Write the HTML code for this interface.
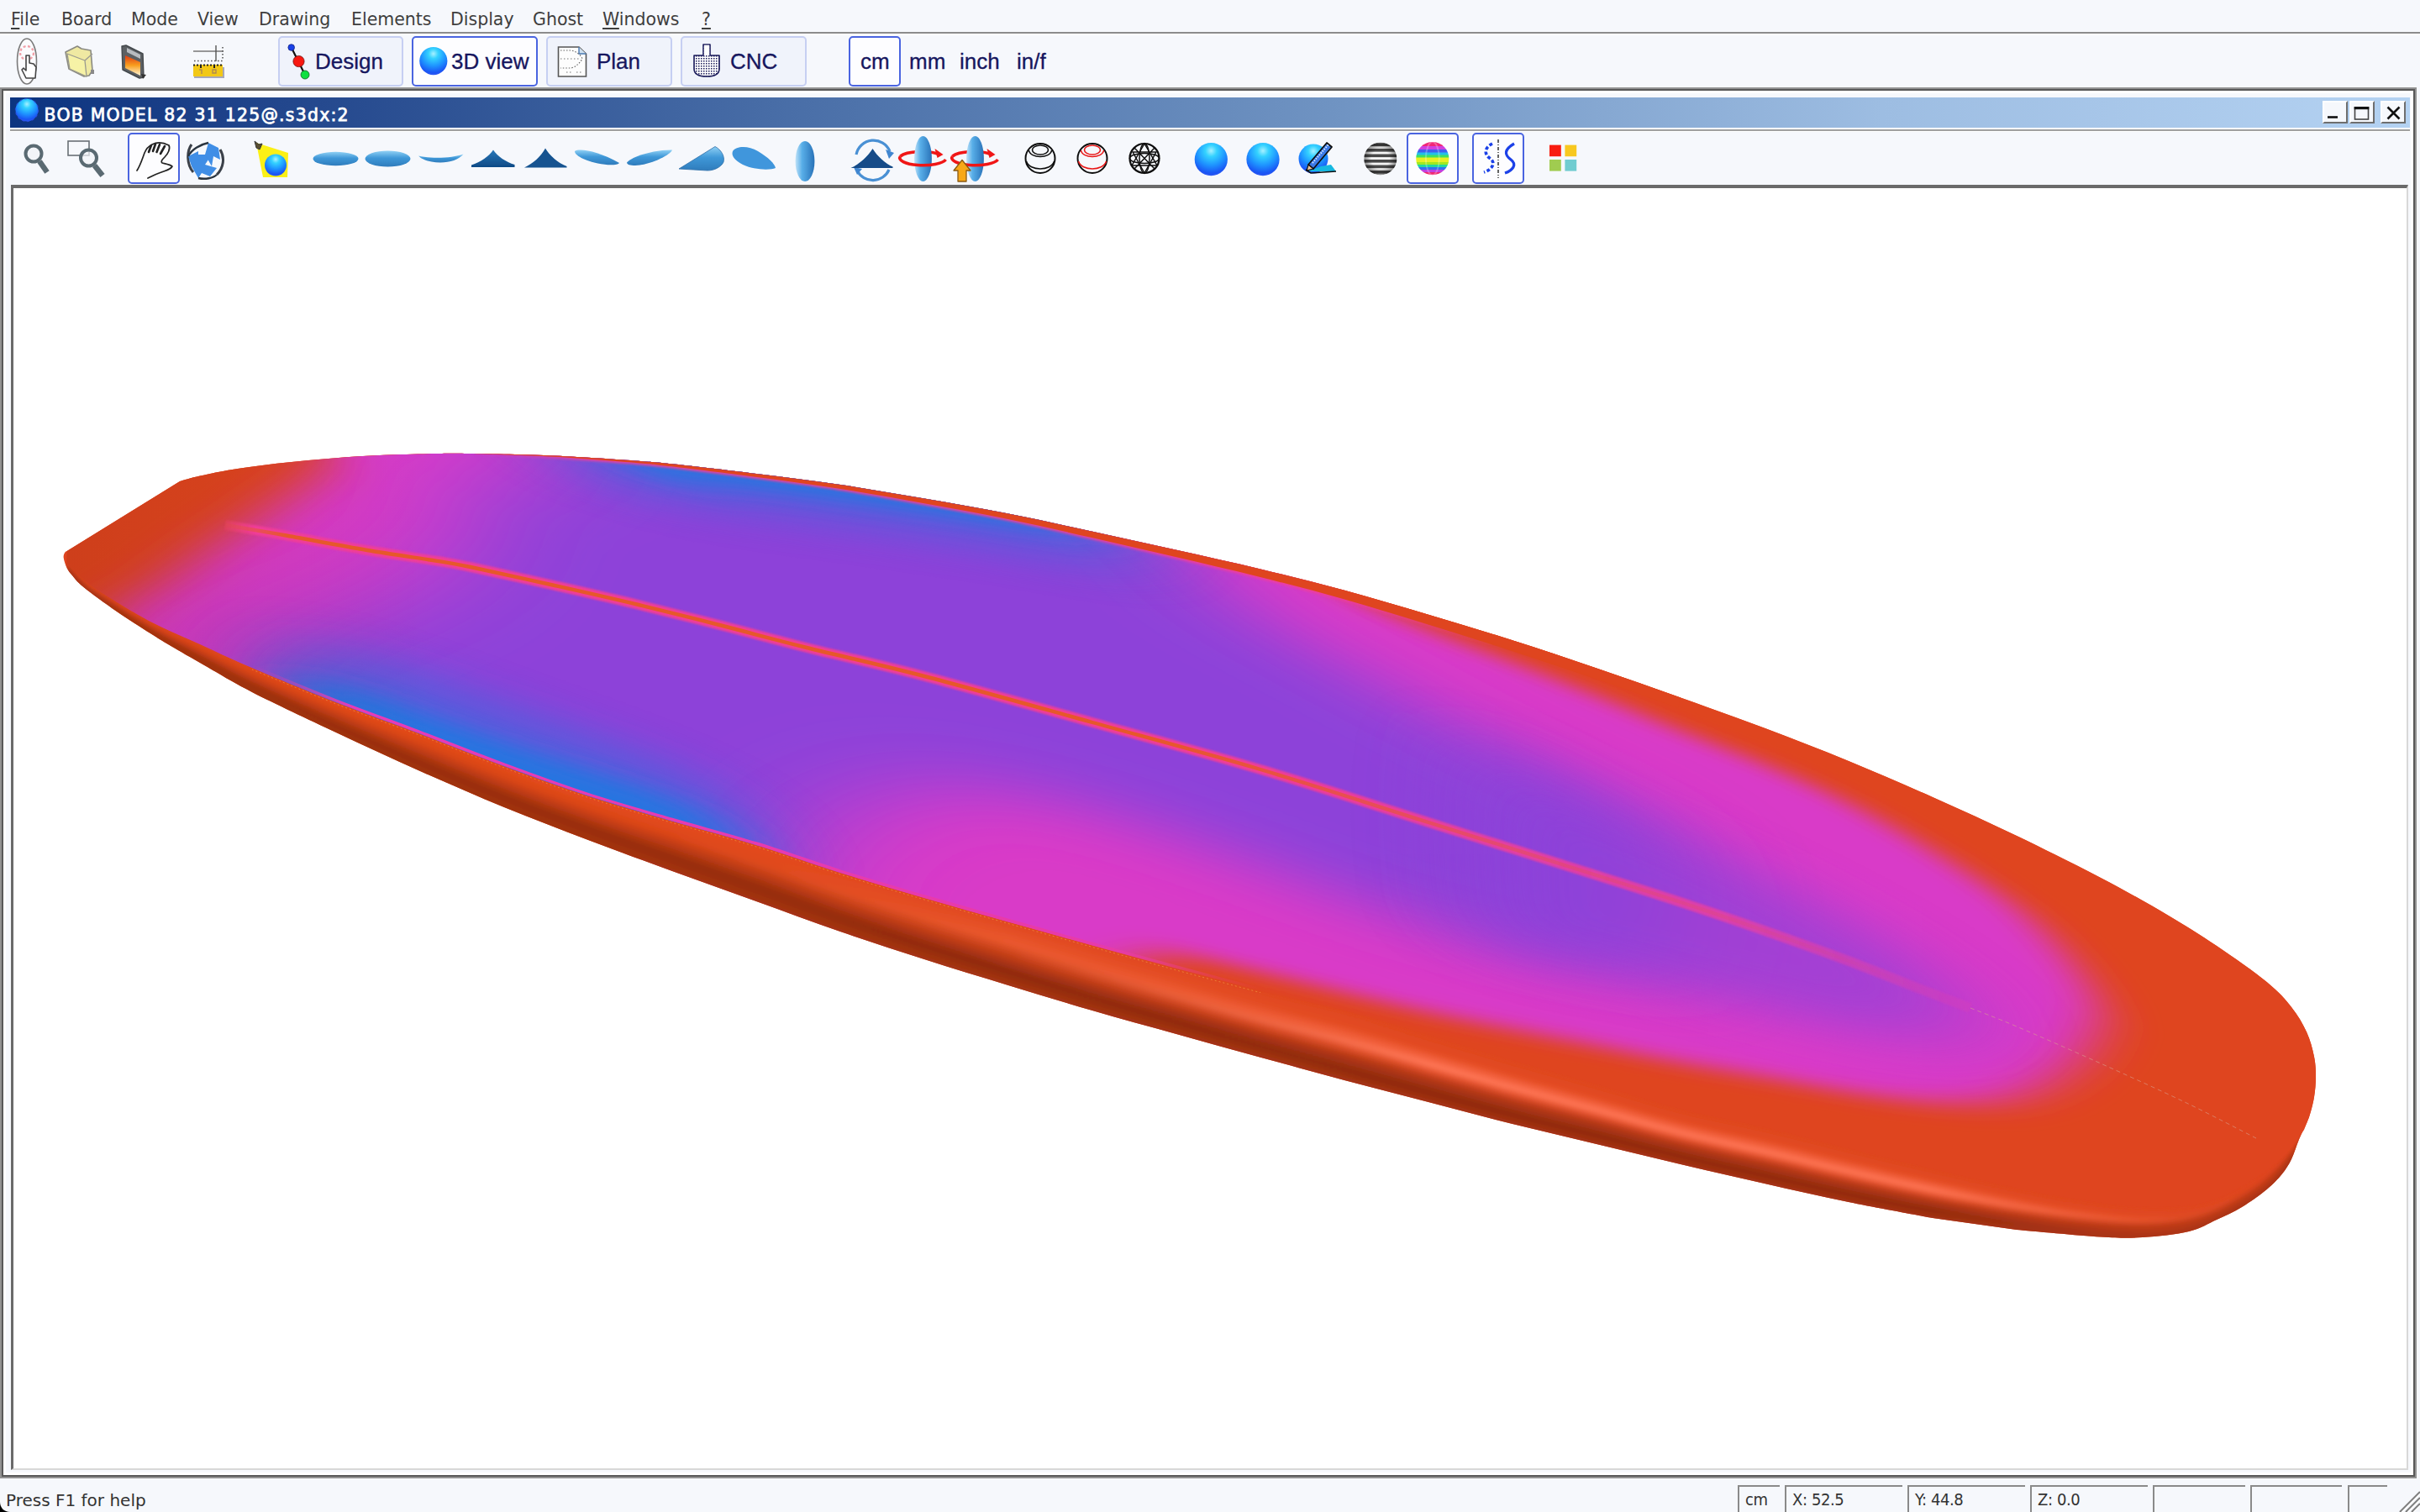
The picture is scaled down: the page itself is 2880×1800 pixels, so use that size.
<!DOCTYPE html>
<html><head><meta charset="utf-8"><title>BOB MODEL 82 31 125@.s3dx:2</title>
<style>
html,body{margin:0;padding:0;}
body{width:2880px;height:1800px;overflow:hidden;background:#f6f8fc;position:relative;font-family:"DejaVu Sans","Liberation Sans",sans-serif;color:#222;}
.abs{position:absolute;}
.menu{position:absolute;top:1.7px;left:0;height:38px;width:2880px;font-size:20.5px;line-height:42px;color:#3e3e3e;}
.menu span{position:absolute;top:0;white-space:nowrap;}
.menu u{text-decoration:underline;text-underline-offset:3px;text-decoration-thickness:2px;}
.hl{position:absolute;left:0;width:2880px;}
.tbtn{position:absolute;top:43px;height:60px;border:2px solid #c6cff2;border-radius:5px;background:#f0f3fb;box-sizing:border-box;font-family:"Liberation Sans",sans-serif;font-size:26px;color:#16165e;}
.tbtn.sel{border-color:#4a64e0;background:#fdfdff;}
.tbtn span{position:absolute;top:13px;white-space:nowrap;-webkit-text-stroke:0.3px #16165e;}
.unit{position:absolute;top:58px;font-family:"Liberation Sans",sans-serif;font-size:26px;color:#16165e;white-space:nowrap;-webkit-text-stroke:0.3px #16165e;}
.selbox{position:absolute;border:2px solid #4a64e0;border-radius:5px;background:#fdfdff;box-sizing:border-box;}
.title{position:absolute;left:12px;top:116px;width:2856px;height:36px;background:linear-gradient(90deg,#0c3480 0%,#1c4088 8%,#4a6fa8 33%,#6f93c2 55%,#9dbde2 78%,#b4d2f2 100%);}
.title span{position:absolute;left:40.5px;top:5.6px;font-size:20.4px;font-weight:normal;-webkit-text-stroke:0.75px #fff;color:#fff;letter-spacing:1.26px;white-space:nowrap;line-height:30px;}
.wbtn{position:absolute;top:120px;width:30px;height:27px;background:#f6f8fc;border-top:2px solid #fff;border-left:2px solid #fff;border-right:2px solid #6e6e6e;border-bottom:2px solid #6e6e6e;box-sizing:border-box;}
.status{position:absolute;font-size:20px;color:#333;white-space:nowrap;}
.sbox{position:absolute;top:1768px;height:40px;border-top:2px solid #8a8a8a;border-left:2px solid #8a8a8a;box-sizing:border-box;font-family:"DejaVu Sans Condensed","DejaVu Sans",sans-serif;font-size:20px;color:#333;line-height:30.5px;padding-left:7px;white-space:nowrap;letter-spacing:-0.4px;}
</style></head><body>
<div class="menu"><span style="left:13px"><u>F</u>ile</span><span style="left:73px">Board</span><span style="left:156px">Mode</span><span style="left:235px">View</span><span style="left:308px">Drawing</span><span style="left:418px">Elements</span><span style="left:536px">Display</span><span style="left:634px">Ghost</span><span style="left:717px"><u>W</u>indows</span><span style="left:835px"><u>?</u></span></div>
<div class="hl" style="top:38px;height:2px;background:#8c8c8c"></div>
<div class="hl" style="top:40px;height:2px;background:#ffffff"></div>
<div class="tbtn" style="left:331px;width:149px"><span style="left:42px">Design</span></div>
<div class="tbtn sel" style="left:490px;width:150px"><span style="left:45px">3D view</span></div>
<div class="tbtn" style="left:650px;width:150px"><span style="left:58px">Plan</span></div>
<div class="tbtn" style="left:810px;width:150px"><span style="left:57px">CNC</span></div>
<div class="selbox" style="left:1010px;top:43px;width:62px;height:60px"></div>
<div class="unit" style="left:1024px">cm</div>
<div class="unit" style="left:1082px">mm</div>
<div class="unit" style="left:1142px">inch</div>
<div class="unit" style="left:1210px">in/f</div>
<div class="abs" style="left:0;top:104px;width:2876px;height:1656px;box-sizing:border-box;border:2px solid #929292;"></div>
<div class="abs" style="left:2px;top:106px;width:2872px;height:1652px;box-sizing:border-box;border:2px solid #585858;"></div>
<div class="abs" style="left:4px;top:108px;width:2868px;height:1648px;box-sizing:border-box;border:3px solid #fff;"></div>
<div class="title"><span>BOB MODEL 82 31 125@.s3dx:2</span></div>
<div class="hl" style="left:12px;width:2856px;top:154px;height:2px;background:#a0a0a0"></div>
<div class="hl" style="left:12px;width:2856px;top:156px;height:1px;background:#fff"></div>
<div class="wbtn" style="left:2764px"></div>
<div class="wbtn" style="left:2795.5px"></div>
<div class="wbtn" style="left:2832.5px"></div>
<div class="selbox" style="left:152px;top:158px;width:62px;height:61px"></div>
<div class="selbox" style="left:1674px;top:158px;width:62px;height:61px"></div>
<div class="selbox" style="left:1752px;top:158px;width:62px;height:61px"></div>
<div class="abs" style="left:13px;top:220px;width:2853px;height:1530px;box-sizing:border-box;background:#fff;border-top:4px solid #6a6a6a;border-left:3px solid #6a6a6a;border-right:2px solid #d8d8d8;border-bottom:2px solid #d8d8d8;"></div>
<div class="status" style="left:7px;top:1771px;line-height:30px">Press F1 for help</div>
<div class="sbox" style="left:2068px;width:50px">cm</div>
<div class="sbox" style="left:2124px;width:140px">X: 52.5</div>
<div class="sbox" style="left:2270px;width:140px">Y: 44.8</div>
<div class="sbox" style="left:2416px;width:140px">Z: 0.0</div>
<div class="sbox" style="left:2562px;width:110px"></div>
<div class="sbox" style="left:2678px;width:109px"></div>
<div class="sbox" style="left:2794px;width:47px"></div>
<svg width="2880" height="1800" viewBox="0 0 2880 1800" style="position:absolute;left:0;top:0">
<defs>
<clipPath id="cs"><path d="M214.0 573.0 C218.0 571.9 227.3 569.0 238.0 566.6 C248.7 564.2 261.5 561.3 278.0 558.7 C294.5 556.1 317.2 553.2 337.0 551.0 C356.8 548.8 377.0 546.9 397.0 545.4 C417.0 543.9 436.5 542.7 457.0 541.8 C477.5 540.9 502.8 540.3 520.0 540.0 C537.2 539.7 536.7 539.6 560.0 540.0 C583.3 540.4 626.7 541.0 660.0 542.5 C693.3 544.0 736.7 547.1 760.0 548.8 C783.3 550.4 776.7 549.8 800.0 552.3 C823.3 554.8 866.7 559.9 900.0 564.0 C933.3 568.1 966.7 572.1 1000.0 577.0 C1033.3 581.9 1066.7 587.8 1100.0 593.5 C1133.3 599.2 1166.7 605.0 1200.0 611.5 C1233.3 618.0 1266.7 625.6 1300.0 632.8 C1333.3 640.0 1366.7 647.3 1400.0 654.8 C1433.3 662.2 1466.7 669.5 1500.0 677.5 C1533.3 685.5 1566.7 693.8 1600.0 702.8 C1633.3 711.8 1666.7 721.9 1700.0 731.8 C1733.3 741.7 1766.7 751.6 1800.0 762.2 C1833.3 772.8 1866.7 784.1 1900.0 795.5 C1933.3 806.9 1966.7 818.6 2000.0 830.5 C2033.3 842.4 2066.7 854.2 2100.0 866.8 C2133.3 879.4 2166.7 892.3 2200.0 906.0 C2233.3 919.7 2266.7 934.2 2300.0 949.0 C2333.3 963.8 2366.7 979.0 2400.0 995.0 C2433.3 1011.0 2470.2 1029.4 2500.0 1045.0 C2529.8 1060.6 2555.6 1075.2 2578.6 1088.7 C2601.6 1102.2 2618.2 1112.6 2638.0 1126.0 C2657.8 1139.4 2682.8 1156.8 2697.6 1169.0 C2712.4 1181.2 2719.1 1189.1 2727.0 1199.0 C2734.9 1208.9 2740.5 1218.8 2745.0 1228.6 C2749.5 1238.4 2752.2 1249.1 2754.0 1258.0 C2755.8 1266.9 2756.0 1274.0 2756.0 1282.0 C2756.0 1290.0 2755.3 1298.0 2754.0 1306.0 C2752.7 1314.0 2751.0 1321.6 2748.0 1330.0 C2745.0 1338.4 2739.5 1348.2 2736.0 1356.5 C2732.5 1364.8 2730.4 1373.1 2727.0 1380.0 C2723.6 1386.9 2720.4 1392.0 2715.5 1398.0 C2710.6 1404.0 2705.5 1409.5 2697.6 1416.0 C2689.7 1422.5 2677.9 1431.0 2668.0 1437.0 C2658.1 1443.0 2648.5 1447.2 2638.0 1452.0 C2627.5 1456.8 2619.7 1462.5 2605.0 1466.0 C2590.3 1469.5 2567.5 1471.9 2550.0 1473.0 C2532.5 1474.1 2525.0 1474.0 2500.0 1472.5 C2475.0 1471.0 2416.7 1465.4 2400.0 1464.0 L2300.0 1450.0 C2283.3 1446.8 2233.3 1437.8 2200.0 1431.0 C2166.7 1424.2 2133.3 1416.5 2100.0 1409.0 C2066.7 1401.5 2033.3 1393.8 2000.0 1386.0 C1966.7 1378.2 1933.3 1370.0 1900.0 1362.0 C1866.7 1354.0 1833.3 1346.3 1800.0 1338.0 C1766.7 1329.7 1733.3 1320.7 1700.0 1312.0 C1666.7 1303.3 1633.3 1294.9 1600.0 1286.0 C1566.7 1277.1 1533.3 1267.9 1500.0 1258.7 C1466.7 1249.5 1433.3 1240.3 1400.0 1231.0 C1366.7 1221.7 1333.3 1212.7 1300.0 1203.0 C1266.7 1193.3 1233.3 1183.2 1200.0 1173.0 C1166.7 1162.8 1133.3 1152.7 1100.0 1142.0 C1066.7 1131.3 1033.3 1120.5 1000.0 1109.0 C966.7 1097.5 933.3 1085.0 900.0 1073.0 C866.7 1061.0 833.3 1049.2 800.0 1037.0 C766.7 1024.8 733.3 1012.7 700.0 1000.0 C666.7 987.3 633.3 974.7 600.0 961.0 C566.7 947.3 533.3 932.8 500.0 918.0 C466.7 903.2 433.3 887.7 400.0 872.0 C366.7 856.3 327.0 837.8 300.0 824.0 C273.0 810.2 254.7 798.5 238.0 789.0 C221.3 779.5 209.8 772.8 200.0 767.0 C190.2 761.2 189.2 760.5 179.0 754.0 C168.8 747.5 152.2 737.2 139.0 728.0 C125.8 718.8 108.3 706.2 99.5 699.0 C90.7 691.8 89.3 688.8 86.0 685.0 C82.7 681.2 81.2 679.5 79.5 676.0 C77.8 672.5 76.1 667.0 75.7 664.0 C75.3 661.0 76.3 659.3 77.0 658.0 C77.7 656.7 79.2 656.3 79.7 656.0 Z"/></clipPath>
<clipPath id="cd"><path d="M214.0 573.0 C218.0 571.9 227.3 569.0 238.0 566.6 C248.7 564.2 261.5 561.3 278.0 558.7 C294.5 556.1 317.2 553.2 337.0 551.0 C356.8 548.8 377.0 546.9 397.0 545.4 C417.0 543.9 436.5 542.7 457.0 541.8 C477.5 540.9 502.8 540.3 520.0 540.0 C537.2 539.7 536.7 539.6 560.0 540.0 C583.3 540.4 626.7 541.0 660.0 542.5 C693.3 544.0 736.7 547.1 760.0 548.8 C783.3 550.4 776.7 549.8 800.0 552.3 C823.3 554.8 866.7 559.9 900.0 564.0 C933.3 568.1 966.7 572.1 1000.0 577.0 C1033.3 581.9 1066.7 587.8 1100.0 593.5 C1133.3 599.2 1166.7 605.0 1200.0 611.5 C1233.3 618.0 1266.7 625.6 1300.0 632.8 C1333.3 640.0 1366.7 647.3 1400.0 654.8 C1433.3 662.2 1466.7 669.5 1500.0 677.5 C1533.3 685.5 1566.7 693.8 1600.0 702.8 C1633.3 711.8 1666.7 721.9 1700.0 731.8 C1733.3 741.7 1766.7 751.6 1800.0 762.2 C1833.3 772.8 1866.7 784.1 1900.0 795.5 C1933.3 806.9 1966.7 818.6 2000.0 830.5 C2033.3 842.4 2066.7 854.2 2100.0 866.8 C2133.3 879.4 2166.7 892.3 2200.0 906.0 C2233.3 919.7 2266.7 934.2 2300.0 949.0 C2333.3 963.8 2366.7 979.0 2400.0 995.0 C2433.3 1011.0 2470.2 1029.4 2500.0 1045.0 C2529.8 1060.6 2555.6 1075.2 2578.6 1088.7 C2601.6 1102.2 2618.2 1112.6 2638.0 1126.0 C2657.8 1139.4 2682.8 1156.8 2697.6 1169.0 C2712.4 1181.2 2719.1 1189.1 2727.0 1199.0 C2734.9 1208.9 2740.5 1218.8 2745.0 1228.6 C2749.5 1238.4 2752.2 1249.1 2754.0 1258.0 C2755.8 1266.9 2756.0 1274.0 2756.0 1282.0 C2756.0 1290.0 2755.3 1298.0 2754.0 1306.0 C2752.7 1314.0 2749.0 1326.0 2748.0 1330.0 L2742.0 1345.0 C2738.7 1349.5 2731.5 1362.5 2722.0 1372.0 C2712.5 1381.5 2699.5 1392.7 2685.0 1402.0 C2670.5 1411.3 2650.8 1422.3 2635.0 1428.0 C2619.2 1433.7 2605.8 1434.7 2590.0 1436.0 C2574.2 1437.3 2559.2 1437.3 2540.0 1436.0 C2520.8 1434.7 2498.3 1431.7 2475.0 1428.0 C2451.7 1424.3 2429.2 1420.1 2400.0 1414.0 C2370.8 1407.9 2333.3 1399.2 2300.0 1391.4 C2266.7 1383.6 2233.3 1375.2 2200.0 1367.0 C2166.7 1358.8 2133.3 1349.8 2100.0 1342.0 C2066.7 1334.2 2033.3 1328.6 2000.0 1320.0 C1966.7 1311.4 1933.3 1300.2 1900.0 1290.5 C1866.7 1280.8 1833.3 1271.8 1800.0 1262.0 C1766.7 1252.2 1733.3 1241.8 1700.0 1232.0 C1666.7 1222.2 1633.3 1211.7 1600.0 1203.0 C1566.7 1194.3 1533.3 1188.0 1500.0 1179.7 C1466.7 1171.4 1433.3 1162.0 1400.0 1153.0 C1366.7 1144.0 1333.3 1134.8 1300.0 1125.5 C1266.7 1116.2 1233.3 1106.9 1200.0 1097.5 C1166.7 1088.1 1133.3 1078.8 1100.0 1069.0 C1066.7 1059.2 1033.3 1049.5 1000.0 1039.0 C966.7 1028.5 933.3 1016.2 900.0 1006.0 C866.7 995.8 833.3 987.2 800.0 977.5 C766.7 967.8 733.3 958.4 700.0 947.5 C666.7 936.6 633.3 924.3 600.0 912.0 C566.7 899.7 533.3 886.2 500.0 873.5 C466.7 860.8 433.3 849.1 400.0 836.0 C366.7 822.9 327.0 806.5 300.0 795.0 C273.0 783.5 258.2 776.2 238.0 767.0 C217.8 757.8 198.8 750.4 179.0 740.0 C159.2 729.6 132.2 712.8 119.0 704.5 C105.8 696.2 106.2 695.6 99.5 690.0 C92.8 684.4 82.4 674.2 79.0 671.0 L79.7 656 Z"/></clipPath>
<filter id="b1" filterUnits="userSpaceOnUse" x="0" y="0" width="2880" height="1800"><feGaussianBlur stdDeviation="1"/></filter>
<filter id="b1_5" filterUnits="userSpaceOnUse" x="0" y="0" width="2880" height="1800"><feGaussianBlur stdDeviation="1.5"/></filter>
<filter id="b2_5" filterUnits="userSpaceOnUse" x="0" y="0" width="2880" height="1800"><feGaussianBlur stdDeviation="2.5"/></filter>
<filter id="b3" filterUnits="userSpaceOnUse" x="0" y="0" width="2880" height="1800"><feGaussianBlur stdDeviation="3"/></filter>
<filter id="b10" filterUnits="userSpaceOnUse" x="0" y="0" width="2880" height="1800"><feGaussianBlur stdDeviation="10"/></filter>
<filter id="b14" filterUnits="userSpaceOnUse" x="0" y="0" width="2880" height="1800"><feGaussianBlur stdDeviation="14"/></filter>
<filter id="b18" filterUnits="userSpaceOnUse" x="0" y="0" width="2880" height="1800"><feGaussianBlur stdDeviation="18"/></filter>
<filter id="b22" filterUnits="userSpaceOnUse" x="0" y="0" width="2880" height="1800"><feGaussianBlur stdDeviation="22"/></filter>
<filter id="b28" filterUnits="userSpaceOnUse" x="0" y="0" width="2880" height="1800"><feGaussianBlur stdDeviation="28"/></filter>
<filter id="b36" filterUnits="userSpaceOnUse" x="0" y="0" width="2880" height="1800"><feGaussianBlur stdDeviation="36"/></filter>
<filter id="b45" filterUnits="userSpaceOnUse" x="0" y="0" width="2880" height="1800"><feGaussianBlur stdDeviation="45"/></filter>
<filter id="b60" filterUnits="userSpaceOnUse" x="0" y="0" width="2880" height="1800"><feGaussianBlur stdDeviation="60"/></filter>
<linearGradient id="rg0" gradientUnits="userSpaceOnUse" x1="75" y1="0" x2="2760" y2="0"><stop offset="0.009" stop-color="#db461c"/><stop offset="0.121" stop-color="#e54b1a"/><stop offset="0.270" stop-color="#e34a1c"/><stop offset="0.419" stop-color="#e14921"/><stop offset="0.605" stop-color="#df461e"/><stop offset="0.829" stop-color="#de461e"/><stop offset="0.922" stop-color="#df451f"/><stop offset="0.978" stop-color="#df451f"/></linearGradient>
<linearGradient id="rg1" gradientUnits="userSpaceOnUse" x1="75" y1="0" x2="2760" y2="0"><stop offset="0.009" stop-color="#da451b"/><stop offset="0.121" stop-color="#e24a19"/><stop offset="0.270" stop-color="#e2491b"/><stop offset="0.419" stop-color="#e24b23"/><stop offset="0.605" stop-color="#e0471f"/><stop offset="0.829" stop-color="#df471f"/><stop offset="0.922" stop-color="#df461f"/><stop offset="0.978" stop-color="#df451f"/></linearGradient>
<linearGradient id="rg2" gradientUnits="userSpaceOnUse" x1="75" y1="0" x2="2760" y2="0"><stop offset="0.009" stop-color="#d8441b"/><stop offset="0.121" stop-color="#e04918"/><stop offset="0.270" stop-color="#e1481b"/><stop offset="0.419" stop-color="#e34e25"/><stop offset="0.605" stop-color="#e14820"/><stop offset="0.829" stop-color="#e04820"/><stop offset="0.922" stop-color="#df461f"/><stop offset="0.978" stop-color="#df451f"/></linearGradient>
<linearGradient id="rg3" gradientUnits="userSpaceOnUse" x1="75" y1="0" x2="2760" y2="0"><stop offset="0.009" stop-color="#d7431a"/><stop offset="0.121" stop-color="#dd4817"/><stop offset="0.270" stop-color="#df481a"/><stop offset="0.419" stop-color="#e55027"/><stop offset="0.605" stop-color="#e14921"/><stop offset="0.829" stop-color="#e14921"/><stop offset="0.922" stop-color="#e04720"/><stop offset="0.978" stop-color="#df451f"/></linearGradient>
<linearGradient id="rg4" gradientUnits="userSpaceOnUse" x1="75" y1="0" x2="2760" y2="0"><stop offset="0.009" stop-color="#d5421a"/><stop offset="0.121" stop-color="#db4617"/><stop offset="0.270" stop-color="#de471a"/><stop offset="0.419" stop-color="#e65229"/><stop offset="0.605" stop-color="#e24a22"/><stop offset="0.829" stop-color="#e24a22"/><stop offset="0.922" stop-color="#e04720"/><stop offset="0.978" stop-color="#df451f"/></linearGradient>
<linearGradient id="rg5" gradientUnits="userSpaceOnUse" x1="75" y1="0" x2="2760" y2="0"><stop offset="0.009" stop-color="#d34119"/><stop offset="0.121" stop-color="#d84516"/><stop offset="0.270" stop-color="#dd4619"/><stop offset="0.419" stop-color="#e8542b"/><stop offset="0.605" stop-color="#e65028"/><stop offset="0.829" stop-color="#e65028"/><stop offset="0.922" stop-color="#e04820"/><stop offset="0.978" stop-color="#df451f"/></linearGradient>
<linearGradient id="rg6" gradientUnits="userSpaceOnUse" x1="75" y1="0" x2="2760" y2="0"><stop offset="0.009" stop-color="#d24019"/><stop offset="0.121" stop-color="#d24315"/><stop offset="0.270" stop-color="#da4519"/><stop offset="0.419" stop-color="#e9562d"/><stop offset="0.605" stop-color="#ec5832"/><stop offset="0.829" stop-color="#ec5832"/><stop offset="0.922" stop-color="#e04820"/><stop offset="0.978" stop-color="#df451f"/></linearGradient>
<linearGradient id="rg7" gradientUnits="userSpaceOnUse" x1="75" y1="0" x2="2760" y2="0"><stop offset="0.009" stop-color="#d03f18"/><stop offset="0.121" stop-color="#cc4115"/><stop offset="0.270" stop-color="#d34317"/><stop offset="0.419" stop-color="#e8572d"/><stop offset="0.605" stop-color="#f3603c"/><stop offset="0.829" stop-color="#f3603c"/><stop offset="0.922" stop-color="#e24c24"/><stop offset="0.978" stop-color="#db441e"/></linearGradient>
<linearGradient id="rg8" gradientUnits="userSpaceOnUse" x1="75" y1="0" x2="2760" y2="0"><stop offset="0.009" stop-color="#cb3d17"/><stop offset="0.121" stop-color="#c73f14"/><stop offset="0.270" stop-color="#cc4016"/><stop offset="0.419" stop-color="#df5128"/><stop offset="0.605" stop-color="#f86b49"/><stop offset="0.829" stop-color="#f86a48"/><stop offset="0.922" stop-color="#e54f28"/><stop offset="0.978" stop-color="#d6421c"/></linearGradient>
<linearGradient id="rg9" gradientUnits="userSpaceOnUse" x1="75" y1="0" x2="2760" y2="0"><stop offset="0.009" stop-color="#c53b16"/><stop offset="0.121" stop-color="#c13d13"/><stop offset="0.270" stop-color="#c53e15"/><stop offset="0.419" stop-color="#d74b23"/><stop offset="0.605" stop-color="#fe7656"/><stop offset="0.829" stop-color="#fe7454"/><stop offset="0.922" stop-color="#e7532c"/><stop offset="0.978" stop-color="#d1401b"/></linearGradient>
<linearGradient id="rg10" gradientUnits="userSpaceOnUse" x1="75" y1="0" x2="2760" y2="0"><stop offset="0.009" stop-color="#bf3a15"/><stop offset="0.121" stop-color="#bb3b12"/><stop offset="0.270" stop-color="#be3b14"/><stop offset="0.419" stop-color="#ce451e"/><stop offset="0.605" stop-color="#f56947"/><stop offset="0.829" stop-color="#f56845"/><stop offset="0.922" stop-color="#e3512b"/><stop offset="0.978" stop-color="#cd3e1a"/></linearGradient>
<linearGradient id="rg11" gradientUnits="userSpaceOnUse" x1="75" y1="0" x2="2760" y2="0"><stop offset="0.009" stop-color="#b83814"/><stop offset="0.121" stop-color="#b53912"/><stop offset="0.270" stop-color="#b63912"/><stop offset="0.419" stop-color="#c53f19"/><stop offset="0.605" stop-color="#e85631"/><stop offset="0.829" stop-color="#e85631"/><stop offset="0.922" stop-color="#d94b25"/><stop offset="0.978" stop-color="#c83d18"/></linearGradient>
<linearGradient id="rg12" gradientUnits="userSpaceOnUse" x1="75" y1="0" x2="2760" y2="0"><stop offset="0.009" stop-color="#b23613"/><stop offset="0.121" stop-color="#b03711"/><stop offset="0.270" stop-color="#af3611"/><stop offset="0.419" stop-color="#bc3b16"/><stop offset="0.605" stop-color="#d64a25"/><stop offset="0.829" stop-color="#d64a25"/><stop offset="0.922" stop-color="#d04520"/><stop offset="0.978" stop-color="#c33b17"/></linearGradient>
<linearGradient id="rg13" gradientUnits="userSpaceOnUse" x1="75" y1="0" x2="2760" y2="0"><stop offset="0.009" stop-color="#ac3412"/><stop offset="0.121" stop-color="#aa3510"/><stop offset="0.270" stop-color="#a73310"/><stop offset="0.419" stop-color="#b23714"/><stop offset="0.605" stop-color="#c33e1a"/><stop offset="0.829" stop-color="#c33e1a"/><stop offset="0.922" stop-color="#c73f1a"/><stop offset="0.978" stop-color="#bf3a16"/></linearGradient>
<linearGradient id="rg14" gradientUnits="userSpaceOnUse" x1="75" y1="0" x2="2760" y2="0"><stop offset="0.009" stop-color="#a63211"/><stop offset="0.121" stop-color="#a4320f"/><stop offset="0.270" stop-color="#a0300f"/><stop offset="0.419" stop-color="#a83313"/><stop offset="0.605" stop-color="#b43714"/><stop offset="0.829" stop-color="#b43714"/><stop offset="0.922" stop-color="#bf3a16"/><stop offset="0.978" stop-color="#bc3915"/></linearGradient>
<linearGradient id="rg15" gradientUnits="userSpaceOnUse" x1="75" y1="0" x2="2760" y2="0"><stop offset="0.009" stop-color="#a03010"/><stop offset="0.121" stop-color="#9f300f"/><stop offset="0.270" stop-color="#992d0e"/><stop offset="0.419" stop-color="#9e3012"/><stop offset="0.605" stop-color="#ab3413"/><stop offset="0.829" stop-color="#ac3413"/><stop offset="0.922" stop-color="#bc3915"/><stop offset="0.978" stop-color="#ba3815"/></linearGradient>
<linearGradient id="rg16" gradientUnits="userSpaceOnUse" x1="75" y1="0" x2="2760" y2="0"><stop offset="0.009" stop-color="#a13110"/><stop offset="0.121" stop-color="#992e0e"/><stop offset="0.270" stop-color="#982d0e"/><stop offset="0.419" stop-color="#952c11"/><stop offset="0.605" stop-color="#a23112"/><stop offset="0.829" stop-color="#a33112"/><stop offset="0.922" stop-color="#b93815"/><stop offset="0.978" stop-color="#b73814"/></linearGradient>
<linearGradient id="rg17" gradientUnits="userSpaceOnUse" x1="75" y1="0" x2="2760" y2="0"><stop offset="0.009" stop-color="#a33111"/><stop offset="0.121" stop-color="#9a2f0e"/><stop offset="0.270" stop-color="#9a2e0f"/><stop offset="0.419" stop-color="#902b10"/><stop offset="0.605" stop-color="#992e11"/><stop offset="0.829" stop-color="#9a2e11"/><stop offset="0.922" stop-color="#b63814"/><stop offset="0.978" stop-color="#b43714"/></linearGradient>
<linearGradient id="rg18" gradientUnits="userSpaceOnUse" x1="75" y1="0" x2="2760" y2="0"><stop offset="0.009" stop-color="#a43211"/><stop offset="0.121" stop-color="#9c2f0f"/><stop offset="0.270" stop-color="#9d2f10"/><stop offset="0.419" stop-color="#952d11"/><stop offset="0.605" stop-color="#902b10"/><stop offset="0.829" stop-color="#922b10"/><stop offset="0.922" stop-color="#b33714"/><stop offset="0.978" stop-color="#b23614"/></linearGradient>
<linearGradient id="rg19" gradientUnits="userSpaceOnUse" x1="75" y1="0" x2="2760" y2="0"><stop offset="0.009" stop-color="#a53211"/><stop offset="0.121" stop-color="#9d300f"/><stop offset="0.270" stop-color="#a03110"/><stop offset="0.419" stop-color="#9b2f11"/><stop offset="0.605" stop-color="#942c10"/><stop offset="0.829" stop-color="#962c10"/><stop offset="0.922" stop-color="#b03613"/><stop offset="0.978" stop-color="#af3613"/></linearGradient>
<linearGradient id="rg20" gradientUnits="userSpaceOnUse" x1="75" y1="0" x2="2760" y2="0"><stop offset="0.009" stop-color="#a63312"/><stop offset="0.121" stop-color="#9e310f"/><stop offset="0.270" stop-color="#a23211"/><stop offset="0.419" stop-color="#a03211"/><stop offset="0.605" stop-color="#9c2f11"/><stop offset="0.829" stop-color="#9d2f11"/><stop offset="0.922" stop-color="#ad3513"/><stop offset="0.978" stop-color="#ac3513"/></linearGradient>
<linearGradient id="rg21" gradientUnits="userSpaceOnUse" x1="75" y1="0" x2="2760" y2="0"><stop offset="0.009" stop-color="#a73412"/><stop offset="0.121" stop-color="#9f3210"/><stop offset="0.270" stop-color="#a53312"/><stop offset="0.419" stop-color="#a53412"/><stop offset="0.605" stop-color="#a43212"/><stop offset="0.829" stop-color="#a43212"/><stop offset="0.922" stop-color="#aa3412"/><stop offset="0.978" stop-color="#a93412"/></linearGradient>
<filter id="f34_10" filterUnits="userSpaceOnUse" x="-400" y="-1200" width="4200" height="3400"><feGaussianBlur stdDeviation="34 10"/></filter><filter id="f80_32" filterUnits="userSpaceOnUse" x="-400" y="-1200" width="4200" height="3400"><feGaussianBlur stdDeviation="80 32"/></filter><filter id="f66_26" filterUnits="userSpaceOnUse" x="-400" y="-1200" width="4200" height="3400"><feGaussianBlur stdDeviation="66 26"/></filter><filter id="f60_18" filterUnits="userSpaceOnUse" x="-400" y="-1200" width="4200" height="3400"><feGaussianBlur stdDeviation="60 18"/></filter><filter id="f46_9" filterUnits="userSpaceOnUse" x="-400" y="-1200" width="4200" height="3400"><feGaussianBlur stdDeviation="46 9"/></filter><filter id="f56_22" filterUnits="userSpaceOnUse" x="-400" y="-1200" width="4200" height="3400"><feGaussianBlur stdDeviation="56 22"/></filter><filter id="f46_11" filterUnits="userSpaceOnUse" x="-400" y="-1200" width="4200" height="3400"><feGaussianBlur stdDeviation="46 11"/></filter>
</defs>
<path d="M214.0 573.0 C218.0 571.9 227.3 569.0 238.0 566.6 C248.7 564.2 261.5 561.3 278.0 558.7 C294.5 556.1 317.2 553.2 337.0 551.0 C356.8 548.8 377.0 546.9 397.0 545.4 C417.0 543.9 436.5 542.7 457.0 541.8 C477.5 540.9 502.8 540.3 520.0 540.0 C537.2 539.7 536.7 539.6 560.0 540.0 C583.3 540.4 626.7 541.0 660.0 542.5 C693.3 544.0 736.7 547.1 760.0 548.8 C783.3 550.4 776.7 549.8 800.0 552.3 C823.3 554.8 866.7 559.9 900.0 564.0 C933.3 568.1 966.7 572.1 1000.0 577.0 C1033.3 581.9 1066.7 587.8 1100.0 593.5 C1133.3 599.2 1166.7 605.0 1200.0 611.5 C1233.3 618.0 1266.7 625.6 1300.0 632.8 C1333.3 640.0 1366.7 647.3 1400.0 654.8 C1433.3 662.2 1466.7 669.5 1500.0 677.5 C1533.3 685.5 1566.7 693.8 1600.0 702.8 C1633.3 711.8 1666.7 721.9 1700.0 731.8 C1733.3 741.7 1766.7 751.6 1800.0 762.2 C1833.3 772.8 1866.7 784.1 1900.0 795.5 C1933.3 806.9 1966.7 818.6 2000.0 830.5 C2033.3 842.4 2066.7 854.2 2100.0 866.8 C2133.3 879.4 2166.7 892.3 2200.0 906.0 C2233.3 919.7 2266.7 934.2 2300.0 949.0 C2333.3 963.8 2366.7 979.0 2400.0 995.0 C2433.3 1011.0 2470.2 1029.4 2500.0 1045.0 C2529.8 1060.6 2555.6 1075.2 2578.6 1088.7 C2601.6 1102.2 2618.2 1112.6 2638.0 1126.0 C2657.8 1139.4 2682.8 1156.8 2697.6 1169.0 C2712.4 1181.2 2719.1 1189.1 2727.0 1199.0 C2734.9 1208.9 2740.5 1218.8 2745.0 1228.6 C2749.5 1238.4 2752.2 1249.1 2754.0 1258.0 C2755.8 1266.9 2756.0 1274.0 2756.0 1282.0 C2756.0 1290.0 2755.3 1298.0 2754.0 1306.0 C2752.7 1314.0 2751.0 1321.6 2748.0 1330.0 C2745.0 1338.4 2739.5 1348.2 2736.0 1356.5 C2732.5 1364.8 2730.4 1373.1 2727.0 1380.0 C2723.6 1386.9 2720.4 1392.0 2715.5 1398.0 C2710.6 1404.0 2705.5 1409.5 2697.6 1416.0 C2689.7 1422.5 2677.9 1431.0 2668.0 1437.0 C2658.1 1443.0 2648.5 1447.2 2638.0 1452.0 C2627.5 1456.8 2619.7 1462.5 2605.0 1466.0 C2590.3 1469.5 2567.5 1471.9 2550.0 1473.0 C2532.5 1474.1 2525.0 1474.0 2500.0 1472.5 C2475.0 1471.0 2416.7 1465.4 2400.0 1464.0 L2300.0 1450.0 C2283.3 1446.8 2233.3 1437.8 2200.0 1431.0 C2166.7 1424.2 2133.3 1416.5 2100.0 1409.0 C2066.7 1401.5 2033.3 1393.8 2000.0 1386.0 C1966.7 1378.2 1933.3 1370.0 1900.0 1362.0 C1866.7 1354.0 1833.3 1346.3 1800.0 1338.0 C1766.7 1329.7 1733.3 1320.7 1700.0 1312.0 C1666.7 1303.3 1633.3 1294.9 1600.0 1286.0 C1566.7 1277.1 1533.3 1267.9 1500.0 1258.7 C1466.7 1249.5 1433.3 1240.3 1400.0 1231.0 C1366.7 1221.7 1333.3 1212.7 1300.0 1203.0 C1266.7 1193.3 1233.3 1183.2 1200.0 1173.0 C1166.7 1162.8 1133.3 1152.7 1100.0 1142.0 C1066.7 1131.3 1033.3 1120.5 1000.0 1109.0 C966.7 1097.5 933.3 1085.0 900.0 1073.0 C866.7 1061.0 833.3 1049.2 800.0 1037.0 C766.7 1024.8 733.3 1012.7 700.0 1000.0 C666.7 987.3 633.3 974.7 600.0 961.0 C566.7 947.3 533.3 932.8 500.0 918.0 C466.7 903.2 433.3 887.7 400.0 872.0 C366.7 856.3 327.0 837.8 300.0 824.0 C273.0 810.2 254.7 798.5 238.0 789.0 C221.3 779.5 209.8 772.8 200.0 767.0 C190.2 761.2 189.2 760.5 179.0 754.0 C168.8 747.5 152.2 737.2 139.0 728.0 C125.8 718.8 108.3 706.2 99.5 699.0 C90.7 691.8 89.3 688.8 86.0 685.0 C82.7 681.2 81.2 679.5 79.5 676.0 C77.8 672.5 76.1 667.0 75.7 664.0 C75.3 661.0 76.3 659.3 77.0 658.0 C77.7 656.7 79.2 656.3 79.7 656.0 Z" fill="#df451f"/>
<g clip-path="url(#cs)"><g filter="url(#b2_5)">
<path d="M79.0 671.0 C82.4 674.2 92.8 684.4 99.5 690.0 C106.2 695.6 105.8 696.2 119.0 704.5 C132.2 712.8 159.2 729.6 179.0 740.0 C198.8 750.4 217.8 757.8 238.0 767.0 C258.2 776.2 273.0 783.5 300.0 795.0 C327.0 806.5 366.7 822.9 400.0 836.0 C433.3 849.1 466.7 860.8 500.0 873.5 C533.3 886.2 566.7 899.7 600.0 912.0 C633.3 924.3 666.7 936.6 700.0 947.5 C733.3 958.4 766.7 967.8 800.0 977.5 C833.3 987.2 866.7 995.8 900.0 1006.0 C933.3 1016.2 966.7 1028.5 1000.0 1039.0 C1033.3 1049.5 1066.7 1059.2 1100.0 1069.0 C1133.3 1078.8 1166.7 1088.1 1200.0 1097.5 C1233.3 1106.9 1266.7 1116.2 1300.0 1125.5 C1333.3 1134.8 1366.7 1144.0 1400.0 1153.0 C1433.3 1162.0 1466.7 1171.4 1500.0 1179.7 C1533.3 1188.0 1566.7 1194.3 1600.0 1203.0 C1633.3 1211.7 1666.7 1222.2 1700.0 1232.0 C1733.3 1241.8 1766.7 1252.2 1800.0 1262.0 C1833.3 1271.8 1866.7 1280.8 1900.0 1290.5 C1933.3 1300.2 1966.7 1311.4 2000.0 1320.0 C2033.3 1328.6 2066.7 1334.2 2100.0 1342.0 C2133.3 1349.8 2166.7 1358.8 2200.0 1367.0 C2233.3 1375.2 2266.7 1383.6 2300.0 1391.4 C2333.3 1399.2 2370.8 1407.9 2400.0 1414.0 C2429.2 1420.1 2451.7 1424.3 2475.0 1428.0 C2498.3 1431.7 2520.8 1434.7 2540.0 1436.0 C2559.2 1437.3 2574.2 1437.3 2590.0 1436.0 C2605.8 1434.7 2619.2 1433.7 2635.0 1428.0 C2650.8 1422.3 2670.5 1411.3 2685.0 1402.0 C2699.5 1392.7 2712.5 1381.5 2722.0 1372.0 C2731.5 1362.5 2738.7 1349.5 2742.0 1345.0 L2749.0 1376.0 C2746.8 1380.7 2743.2 1392.7 2736.0 1404.0 C2728.8 1415.3 2720.2 1431.5 2706.0 1444.0 C2691.8 1456.5 2667.7 1470.2 2651.0 1479.0 C2634.3 1487.8 2622.7 1493.0 2606.0 1497.0 C2589.3 1501.0 2572.8 1502.3 2551.0 1503.0 C2529.2 1503.7 2500.2 1502.5 2475.0 1501.0 C2449.8 1499.5 2429.2 1497.5 2400.0 1494.0 C2370.8 1490.5 2333.3 1485.5 2300.0 1480.0 C2266.7 1474.5 2233.3 1467.8 2200.0 1461.0 C2166.7 1454.2 2133.3 1446.5 2100.0 1439.0 C2066.7 1431.5 2033.3 1423.8 2000.0 1416.0 C1966.7 1408.2 1933.3 1400.0 1900.0 1392.0 C1866.7 1384.0 1833.3 1376.3 1800.0 1368.0 C1766.7 1359.7 1733.3 1350.7 1700.0 1342.0 C1666.7 1333.3 1633.3 1324.9 1600.0 1316.0 C1566.7 1307.1 1533.3 1297.9 1500.0 1288.7 C1466.7 1279.5 1433.3 1270.3 1400.0 1261.0 C1366.7 1251.7 1333.3 1242.7 1300.0 1233.0 C1266.7 1223.3 1233.3 1213.2 1200.0 1203.0 C1166.7 1192.8 1133.3 1182.7 1100.0 1172.0 C1066.7 1161.3 1033.3 1150.5 1000.0 1139.0 C966.7 1127.5 933.3 1115.0 900.0 1103.0 C866.7 1091.0 833.3 1079.2 800.0 1067.0 C766.7 1054.8 733.3 1042.7 700.0 1030.0 C666.7 1017.3 633.3 1004.7 600.0 991.0 C566.7 977.3 533.3 962.8 500.0 948.0 C466.7 933.2 433.3 917.7 400.0 902.0 C366.7 886.3 327.0 867.8 300.0 854.0 C273.0 840.2 258.2 830.7 238.0 819.0 C217.8 807.3 198.8 796.6 179.0 784.0 C159.2 771.4 132.2 752.5 119.0 743.3 C105.8 734.1 106.2 735.8 99.5 729.0 C92.8 722.2 82.4 706.8 79.0 702.4 Z" fill="url(#rg0)"/>
<path d="M79.0 671.1 C82.4 674.3 92.8 684.8 99.5 690.4 C106.2 696.0 105.8 696.5 119.0 704.9 C132.2 713.3 159.2 730.1 179.0 740.6 C198.8 751.2 217.8 758.7 238.0 768.0 C258.2 777.3 273.0 784.7 300.0 796.3 C327.0 807.9 366.7 824.4 400.0 837.6 C433.3 850.8 466.7 862.8 500.0 875.5 C533.3 888.3 566.7 901.8 600.0 914.2 C633.3 926.6 666.7 938.9 700.0 949.9 C733.3 960.9 766.7 970.3 800.0 980.2 C833.3 990.1 866.7 998.7 900.0 1009.0 C933.3 1019.4 966.7 1031.6 1000.0 1042.2 C1033.3 1052.7 1066.7 1062.5 1100.0 1072.3 C1133.3 1082.1 1166.7 1091.5 1200.0 1100.9 C1233.3 1110.4 1266.7 1119.8 1300.0 1129.0 C1333.3 1138.3 1366.7 1147.5 1400.0 1156.5 C1433.3 1165.6 1466.7 1174.9 1500.0 1183.3 C1533.3 1191.7 1566.7 1198.0 1600.0 1206.8 C1633.3 1215.5 1666.7 1225.9 1700.0 1235.6 C1733.3 1245.4 1766.7 1255.8 1800.0 1265.5 C1833.3 1275.1 1866.7 1284.2 1900.0 1293.8 C1933.3 1303.3 1966.7 1314.5 2000.0 1323.0 C2033.3 1331.5 2066.7 1337.2 2100.0 1345.0 C2133.3 1352.9 2166.7 1361.7 2200.0 1369.9 C2233.3 1378.1 2266.7 1386.3 2300.0 1394.1 C2333.3 1401.8 2370.8 1410.3 2400.0 1416.3 C2429.2 1422.3 2451.6 1426.4 2475.0 1430.0 C2498.4 1433.5 2521.0 1436.4 2540.2 1437.7 C2559.5 1438.9 2574.6 1438.9 2590.5 1437.4 C2606.3 1436.0 2619.6 1434.8 2635.5 1429.0 C2651.3 1423.1 2671.2 1412.0 2685.7 1402.5 C2700.2 1393.1 2713.0 1381.7 2722.4 1372.1 C2731.8 1362.5 2738.8 1349.6 2742.0 1345.0 L2749.0 1376.0 C2746.8 1380.7 2743.2 1392.7 2736.0 1404.0 C2728.8 1415.3 2720.2 1431.5 2706.0 1444.0 C2691.8 1456.5 2667.7 1470.2 2651.0 1479.0 C2634.3 1487.8 2622.7 1493.0 2606.0 1497.0 C2589.3 1501.0 2572.8 1502.3 2551.0 1503.0 C2529.2 1503.7 2500.2 1502.5 2475.0 1501.0 C2449.8 1499.5 2429.2 1497.5 2400.0 1494.0 C2370.8 1490.5 2333.3 1485.5 2300.0 1480.0 C2266.7 1474.5 2233.3 1467.8 2200.0 1461.0 C2166.7 1454.2 2133.3 1446.5 2100.0 1439.0 C2066.7 1431.5 2033.3 1423.8 2000.0 1416.0 C1966.7 1408.2 1933.3 1400.0 1900.0 1392.0 C1866.7 1384.0 1833.3 1376.3 1800.0 1368.0 C1766.7 1359.7 1733.3 1350.7 1700.0 1342.0 C1666.7 1333.3 1633.3 1324.9 1600.0 1316.0 C1566.7 1307.1 1533.3 1297.9 1500.0 1288.7 C1466.7 1279.5 1433.3 1270.3 1400.0 1261.0 C1366.7 1251.7 1333.3 1242.7 1300.0 1233.0 C1266.7 1223.3 1233.3 1213.2 1200.0 1203.0 C1166.7 1192.8 1133.3 1182.7 1100.0 1172.0 C1066.7 1161.3 1033.3 1150.5 1000.0 1139.0 C966.7 1127.5 933.3 1115.0 900.0 1103.0 C866.7 1091.0 833.3 1079.2 800.0 1067.0 C766.7 1054.8 733.3 1042.7 700.0 1030.0 C666.7 1017.3 633.3 1004.7 600.0 991.0 C566.7 977.3 533.3 962.8 500.0 948.0 C466.7 933.2 433.3 917.7 400.0 902.0 C366.7 886.3 327.0 867.8 300.0 854.0 C273.0 840.2 258.2 830.7 238.0 819.0 C217.8 807.3 198.8 796.6 179.0 784.0 C159.2 771.4 132.2 752.5 119.0 743.3 C105.8 734.1 106.2 735.8 99.5 729.0 C92.8 722.2 82.4 706.8 79.0 702.4 Z" fill="url(#rg1)"/>
<path d="M79.0 671.1 C82.4 674.4 92.8 685.1 99.5 690.8 C106.2 696.5 105.8 696.9 119.0 705.3 C132.2 713.7 159.2 730.7 179.0 741.3 C198.8 751.9 217.8 759.6 238.0 769.0 C258.2 778.4 273.0 785.9 300.0 797.6 C327.0 809.3 366.7 826.0 400.0 839.3 C433.3 852.6 466.7 864.7 500.0 877.5 C533.3 890.4 566.7 904.0 600.0 916.5 C633.3 928.9 666.7 941.2 700.0 952.3 C733.3 963.3 766.7 972.9 800.0 982.9 C833.3 992.9 866.7 1001.7 900.0 1012.1 C933.3 1022.5 966.7 1034.8 1000.0 1045.4 C1033.3 1056.0 1066.7 1065.8 1100.0 1075.6 C1133.3 1085.5 1166.7 1094.9 1200.0 1104.4 C1233.3 1113.8 1266.7 1123.3 1300.0 1132.5 C1333.3 1141.8 1366.7 1151.0 1400.0 1160.1 C1433.3 1169.1 1466.7 1178.5 1500.0 1186.9 C1533.3 1195.3 1566.7 1201.8 1600.0 1210.5 C1633.3 1219.3 1666.7 1229.5 1700.0 1239.3 C1733.3 1249.0 1766.7 1259.3 1800.0 1268.9 C1833.3 1278.5 1866.7 1287.5 1900.0 1297.0 C1933.3 1306.5 1966.7 1317.5 2000.0 1326.0 C2033.3 1334.5 2066.7 1340.3 2100.0 1348.1 C2133.3 1355.9 2166.7 1364.7 2200.0 1372.8 C2233.3 1380.9 2266.7 1389.1 2300.0 1396.7 C2333.3 1404.3 2370.8 1412.7 2400.0 1418.5 C2429.2 1424.4 2451.6 1428.4 2475.0 1431.9 C2498.4 1435.4 2521.1 1438.2 2540.5 1439.4 C2559.8 1440.5 2575.0 1440.4 2590.9 1438.8 C2606.8 1437.2 2620.0 1435.9 2635.9 1429.9 C2651.8 1424.0 2671.9 1412.7 2686.4 1403.1 C2700.8 1393.5 2713.4 1381.8 2722.7 1372.2 C2732.0 1362.5 2738.9 1349.6 2742.1 1345.1 L2749.0 1376.0 C2746.8 1380.7 2743.2 1392.7 2736.0 1404.0 C2728.8 1415.3 2720.2 1431.5 2706.0 1444.0 C2691.8 1456.5 2667.7 1470.2 2651.0 1479.0 C2634.3 1487.8 2622.7 1493.0 2606.0 1497.0 C2589.3 1501.0 2572.8 1502.3 2551.0 1503.0 C2529.2 1503.7 2500.2 1502.5 2475.0 1501.0 C2449.8 1499.5 2429.2 1497.5 2400.0 1494.0 C2370.8 1490.5 2333.3 1485.5 2300.0 1480.0 C2266.7 1474.5 2233.3 1467.8 2200.0 1461.0 C2166.7 1454.2 2133.3 1446.5 2100.0 1439.0 C2066.7 1431.5 2033.3 1423.8 2000.0 1416.0 C1966.7 1408.2 1933.3 1400.0 1900.0 1392.0 C1866.7 1384.0 1833.3 1376.3 1800.0 1368.0 C1766.7 1359.7 1733.3 1350.7 1700.0 1342.0 C1666.7 1333.3 1633.3 1324.9 1600.0 1316.0 C1566.7 1307.1 1533.3 1297.9 1500.0 1288.7 C1466.7 1279.5 1433.3 1270.3 1400.0 1261.0 C1366.7 1251.7 1333.3 1242.7 1300.0 1233.0 C1266.7 1223.3 1233.3 1213.2 1200.0 1203.0 C1166.7 1192.8 1133.3 1182.7 1100.0 1172.0 C1066.7 1161.3 1033.3 1150.5 1000.0 1139.0 C966.7 1127.5 933.3 1115.0 900.0 1103.0 C866.7 1091.0 833.3 1079.2 800.0 1067.0 C766.7 1054.8 733.3 1042.7 700.0 1030.0 C666.7 1017.3 633.3 1004.7 600.0 991.0 C566.7 977.3 533.3 962.8 500.0 948.0 C466.7 933.2 433.3 917.7 400.0 902.0 C366.7 886.3 327.0 867.8 300.0 854.0 C273.0 840.2 258.2 830.7 238.0 819.0 C217.8 807.3 198.8 796.6 179.0 784.0 C159.2 771.4 132.2 752.5 119.0 743.3 C105.8 734.1 106.2 735.8 99.5 729.0 C92.8 722.2 82.4 706.8 79.0 702.4 Z" fill="url(#rg2)"/>
<path d="M79.0 671.2 C82.4 674.5 92.8 685.5 99.5 691.2 C106.2 697.0 105.8 697.3 119.0 705.7 C132.2 714.1 159.2 731.2 179.0 741.9 C198.8 752.6 217.8 760.5 238.0 770.0 C258.2 779.5 273.0 787.1 300.0 799.0 C327.0 810.8 366.7 827.5 400.0 840.9 C433.3 854.3 466.7 866.6 500.0 879.6 C533.3 892.5 566.7 906.2 600.0 918.7 C633.3 931.2 666.7 943.5 700.0 954.7 C733.3 965.8 766.7 975.5 800.0 985.6 C833.3 995.7 866.7 1004.6 900.0 1015.1 C933.3 1025.6 966.7 1037.9 1000.0 1048.5 C1033.3 1059.2 1066.7 1069.1 1100.0 1079.0 C1133.3 1088.8 1166.7 1098.3 1200.0 1107.8 C1233.3 1117.3 1266.7 1126.8 1300.0 1136.1 C1333.3 1145.4 1366.7 1154.6 1400.0 1163.6 C1433.3 1172.7 1466.7 1182.0 1500.0 1190.5 C1533.3 1198.9 1566.7 1205.6 1600.0 1214.3 C1633.3 1223.1 1666.7 1233.2 1700.0 1242.9 C1733.3 1252.6 1766.7 1262.8 1800.0 1272.4 C1833.3 1281.9 1866.7 1290.8 1900.0 1300.2 C1933.3 1309.7 1966.7 1320.5 2000.0 1329.0 C2033.3 1337.5 2066.7 1343.3 2100.0 1351.1 C2133.3 1358.9 2166.7 1367.7 2200.0 1375.7 C2233.3 1383.8 2266.7 1391.9 2300.0 1399.4 C2333.3 1406.9 2370.8 1415.1 2400.0 1420.8 C2429.2 1426.6 2451.6 1430.5 2475.0 1433.9 C2498.4 1437.2 2521.3 1440.0 2540.7 1441.0 C2560.1 1442.1 2575.4 1441.9 2591.4 1440.2 C2607.3 1438.5 2620.4 1437.0 2636.4 1430.9 C2652.3 1424.8 2672.6 1413.4 2687.0 1403.6 C2701.5 1393.9 2713.9 1382.0 2723.1 1372.3 C2732.3 1362.5 2739.0 1349.7 2742.1 1345.1 L2749.0 1376.0 C2746.8 1380.7 2743.2 1392.7 2736.0 1404.0 C2728.8 1415.3 2720.2 1431.5 2706.0 1444.0 C2691.8 1456.5 2667.7 1470.2 2651.0 1479.0 C2634.3 1487.8 2622.7 1493.0 2606.0 1497.0 C2589.3 1501.0 2572.8 1502.3 2551.0 1503.0 C2529.2 1503.7 2500.2 1502.5 2475.0 1501.0 C2449.8 1499.5 2429.2 1497.5 2400.0 1494.0 C2370.8 1490.5 2333.3 1485.5 2300.0 1480.0 C2266.7 1474.5 2233.3 1467.8 2200.0 1461.0 C2166.7 1454.2 2133.3 1446.5 2100.0 1439.0 C2066.7 1431.5 2033.3 1423.8 2000.0 1416.0 C1966.7 1408.2 1933.3 1400.0 1900.0 1392.0 C1866.7 1384.0 1833.3 1376.3 1800.0 1368.0 C1766.7 1359.7 1733.3 1350.7 1700.0 1342.0 C1666.7 1333.3 1633.3 1324.9 1600.0 1316.0 C1566.7 1307.1 1533.3 1297.9 1500.0 1288.7 C1466.7 1279.5 1433.3 1270.3 1400.0 1261.0 C1366.7 1251.7 1333.3 1242.7 1300.0 1233.0 C1266.7 1223.3 1233.3 1213.2 1200.0 1203.0 C1166.7 1192.8 1133.3 1182.7 1100.0 1172.0 C1066.7 1161.3 1033.3 1150.5 1000.0 1139.0 C966.7 1127.5 933.3 1115.0 900.0 1103.0 C866.7 1091.0 833.3 1079.2 800.0 1067.0 C766.7 1054.8 733.3 1042.7 700.0 1030.0 C666.7 1017.3 633.3 1004.7 600.0 991.0 C566.7 977.3 533.3 962.8 500.0 948.0 C466.7 933.2 433.3 917.7 400.0 902.0 C366.7 886.3 327.0 867.8 300.0 854.0 C273.0 840.2 258.2 830.7 238.0 819.0 C217.8 807.3 198.8 796.6 179.0 784.0 C159.2 771.4 132.2 752.5 119.0 743.3 C105.8 734.1 106.2 735.8 99.5 729.0 C92.8 722.2 82.4 706.8 79.0 702.4 Z" fill="url(#rg3)"/>
<path d="M79.0 671.3 C82.4 674.7 92.8 685.8 99.5 691.6 C106.2 697.4 105.8 697.6 119.0 706.1 C132.2 714.6 159.2 731.7 179.0 742.5 C198.8 753.4 217.8 761.4 238.0 771.0 C258.2 780.6 273.0 788.3 300.0 800.3 C327.0 812.2 366.7 829.0 400.0 842.5 C433.3 856.1 466.7 868.5 500.0 881.6 C533.3 894.7 566.7 908.3 600.0 920.9 C633.3 933.5 666.7 945.8 700.0 957.0 C733.3 968.3 766.7 978.1 800.0 988.3 C833.3 998.5 866.7 1007.6 900.0 1018.2 C933.3 1028.8 966.7 1041.0 1000.0 1051.7 C1033.3 1062.4 1066.7 1072.4 1100.0 1082.3 C1133.3 1092.2 1166.7 1101.7 1200.0 1111.2 C1233.3 1120.8 1266.7 1130.3 1300.0 1139.6 C1333.3 1148.9 1366.7 1158.1 1400.0 1167.2 C1433.3 1176.3 1466.7 1185.6 1500.0 1194.1 C1533.3 1202.5 1566.7 1209.3 1600.0 1218.1 C1633.3 1226.8 1666.7 1236.9 1700.0 1246.5 C1733.3 1256.2 1766.7 1266.3 1800.0 1275.8 C1833.3 1285.3 1866.7 1294.1 1900.0 1303.5 C1933.3 1312.9 1966.7 1323.6 2000.0 1332.0 C2033.3 1340.4 2066.7 1346.4 2100.0 1354.2 C2133.3 1362.0 2166.7 1370.7 2200.0 1378.6 C2233.3 1386.6 2266.7 1394.6 2300.0 1402.1 C2333.3 1409.5 2370.8 1417.5 2400.0 1423.1 C2429.2 1428.7 2451.5 1432.5 2475.0 1435.8 C2498.5 1439.1 2521.4 1441.8 2540.9 1442.7 C2560.4 1443.7 2575.8 1443.5 2591.8 1441.6 C2607.8 1439.8 2620.8 1438.1 2636.8 1431.8 C2652.8 1425.6 2673.3 1414.1 2687.7 1404.2 C2702.2 1394.3 2714.4 1382.2 2723.5 1372.4 C2732.5 1362.5 2739.1 1349.7 2742.2 1345.2 L2749.0 1376.0 C2746.8 1380.7 2743.2 1392.7 2736.0 1404.0 C2728.8 1415.3 2720.2 1431.5 2706.0 1444.0 C2691.8 1456.5 2667.7 1470.2 2651.0 1479.0 C2634.3 1487.8 2622.7 1493.0 2606.0 1497.0 C2589.3 1501.0 2572.8 1502.3 2551.0 1503.0 C2529.2 1503.7 2500.2 1502.5 2475.0 1501.0 C2449.8 1499.5 2429.2 1497.5 2400.0 1494.0 C2370.8 1490.5 2333.3 1485.5 2300.0 1480.0 C2266.7 1474.5 2233.3 1467.8 2200.0 1461.0 C2166.7 1454.2 2133.3 1446.5 2100.0 1439.0 C2066.7 1431.5 2033.3 1423.8 2000.0 1416.0 C1966.7 1408.2 1933.3 1400.0 1900.0 1392.0 C1866.7 1384.0 1833.3 1376.3 1800.0 1368.0 C1766.7 1359.7 1733.3 1350.7 1700.0 1342.0 C1666.7 1333.3 1633.3 1324.9 1600.0 1316.0 C1566.7 1307.1 1533.3 1297.9 1500.0 1288.7 C1466.7 1279.5 1433.3 1270.3 1400.0 1261.0 C1366.7 1251.7 1333.3 1242.7 1300.0 1233.0 C1266.7 1223.3 1233.3 1213.2 1200.0 1203.0 C1166.7 1192.8 1133.3 1182.7 1100.0 1172.0 C1066.7 1161.3 1033.3 1150.5 1000.0 1139.0 C966.7 1127.5 933.3 1115.0 900.0 1103.0 C866.7 1091.0 833.3 1079.2 800.0 1067.0 C766.7 1054.8 733.3 1042.7 700.0 1030.0 C666.7 1017.3 633.3 1004.7 600.0 991.0 C566.7 977.3 533.3 962.8 500.0 948.0 C466.7 933.2 433.3 917.7 400.0 902.0 C366.7 886.3 327.0 867.8 300.0 854.0 C273.0 840.2 258.2 830.7 238.0 819.0 C217.8 807.3 198.8 796.6 179.0 784.0 C159.2 771.4 132.2 752.5 119.0 743.3 C105.8 734.1 106.2 735.8 99.5 729.0 C92.8 722.2 82.4 706.8 79.0 702.4 Z" fill="url(#rg4)"/>
<path d="M79.0 671.3 C82.4 674.8 92.8 686.2 99.5 692.0 C106.2 697.9 105.8 698.0 119.0 706.5 C132.2 715.0 159.2 732.3 179.0 743.2 C198.8 754.1 217.8 762.3 238.0 772.0 C258.2 781.7 273.0 789.6 300.0 801.6 C327.0 813.6 366.7 830.5 400.0 844.2 C433.3 857.9 466.7 870.5 500.0 883.6 C533.3 896.8 566.7 910.5 600.0 923.1 C633.3 935.8 666.7 948.1 700.0 959.4 C733.3 970.7 766.7 980.7 800.0 991.0 C833.3 1001.3 866.7 1010.6 900.0 1021.2 C933.3 1031.9 966.7 1044.2 1000.0 1054.9 C1033.3 1065.6 1066.7 1075.6 1100.0 1085.6 C1133.3 1095.5 1166.7 1105.1 1200.0 1114.7 C1233.3 1124.2 1266.7 1133.8 1300.0 1143.1 C1333.3 1152.5 1366.7 1161.6 1400.0 1170.7 C1433.3 1179.8 1466.7 1189.1 1500.0 1197.7 C1533.3 1206.2 1566.7 1213.1 1600.0 1221.9 C1633.3 1230.6 1666.7 1240.6 1700.0 1250.2 C1733.3 1259.8 1766.7 1269.8 1800.0 1279.3 C1833.3 1288.7 1866.7 1297.5 1900.0 1306.8 C1933.3 1316.0 1966.7 1326.6 2000.0 1335.0 C2033.3 1343.4 2066.7 1349.5 2100.0 1357.2 C2133.3 1365.0 2166.7 1373.6 2200.0 1381.5 C2233.3 1389.5 2266.7 1397.4 2300.0 1404.7 C2333.3 1412.0 2370.8 1419.9 2400.0 1425.4 C2429.2 1430.9 2451.5 1434.6 2475.0 1437.8 C2498.5 1440.9 2521.6 1443.5 2541.1 1444.4 C2560.7 1445.3 2576.2 1445.0 2592.3 1443.0 C2608.3 1441.1 2621.2 1439.2 2637.3 1432.8 C2653.3 1426.4 2674.0 1414.8 2688.4 1404.7 C2702.8 1394.7 2714.8 1382.4 2723.8 1372.5 C2732.8 1362.5 2739.2 1349.8 2742.2 1345.2 L2749.0 1376.0 C2746.8 1380.7 2743.2 1392.7 2736.0 1404.0 C2728.8 1415.3 2720.2 1431.5 2706.0 1444.0 C2691.8 1456.5 2667.7 1470.2 2651.0 1479.0 C2634.3 1487.8 2622.7 1493.0 2606.0 1497.0 C2589.3 1501.0 2572.8 1502.3 2551.0 1503.0 C2529.2 1503.7 2500.2 1502.5 2475.0 1501.0 C2449.8 1499.5 2429.2 1497.5 2400.0 1494.0 C2370.8 1490.5 2333.3 1485.5 2300.0 1480.0 C2266.7 1474.5 2233.3 1467.8 2200.0 1461.0 C2166.7 1454.2 2133.3 1446.5 2100.0 1439.0 C2066.7 1431.5 2033.3 1423.8 2000.0 1416.0 C1966.7 1408.2 1933.3 1400.0 1900.0 1392.0 C1866.7 1384.0 1833.3 1376.3 1800.0 1368.0 C1766.7 1359.7 1733.3 1350.7 1700.0 1342.0 C1666.7 1333.3 1633.3 1324.9 1600.0 1316.0 C1566.7 1307.1 1533.3 1297.9 1500.0 1288.7 C1466.7 1279.5 1433.3 1270.3 1400.0 1261.0 C1366.7 1251.7 1333.3 1242.7 1300.0 1233.0 C1266.7 1223.3 1233.3 1213.2 1200.0 1203.0 C1166.7 1192.8 1133.3 1182.7 1100.0 1172.0 C1066.7 1161.3 1033.3 1150.5 1000.0 1139.0 C966.7 1127.5 933.3 1115.0 900.0 1103.0 C866.7 1091.0 833.3 1079.2 800.0 1067.0 C766.7 1054.8 733.3 1042.7 700.0 1030.0 C666.7 1017.3 633.3 1004.7 600.0 991.0 C566.7 977.3 533.3 962.8 500.0 948.0 C466.7 933.2 433.3 917.7 400.0 902.0 C366.7 886.3 327.0 867.8 300.0 854.0 C273.0 840.2 258.2 830.7 238.0 819.0 C217.8 807.3 198.8 796.6 179.0 784.0 C159.2 771.4 132.2 752.5 119.0 743.3 C105.8 734.1 106.2 735.8 99.5 729.0 C92.8 722.2 82.4 706.8 79.0 702.4 Z" fill="url(#rg5)"/>
<path d="M79.0 671.4 C82.4 674.9 92.8 686.5 99.5 692.5 C106.2 698.4 105.8 698.3 119.0 706.9 C132.2 715.5 159.2 732.8 179.0 743.8 C198.8 754.8 217.8 763.2 238.0 773.0 C258.2 782.8 273.0 790.8 300.0 802.9 C327.0 815.0 366.7 832.0 400.0 845.8 C433.3 859.6 466.7 872.4 500.0 885.6 C533.3 898.9 566.7 912.7 600.0 925.4 C633.3 938.1 666.7 950.4 700.0 961.8 C733.3 973.2 766.7 983.3 800.0 993.7 C833.3 1004.1 866.7 1013.5 900.0 1024.3 C933.3 1035.0 966.7 1047.3 1000.0 1058.1 C1033.3 1068.9 1066.7 1078.9 1100.0 1088.9 C1133.3 1098.9 1166.7 1108.5 1200.0 1118.1 C1233.3 1127.7 1266.7 1137.3 1300.0 1146.6 C1333.3 1156.0 1366.7 1165.2 1400.0 1174.3 C1433.3 1183.4 1466.7 1192.7 1500.0 1201.2 C1533.3 1209.8 1566.7 1216.9 1600.0 1225.6 C1633.3 1234.4 1666.7 1244.3 1700.0 1253.8 C1733.3 1263.3 1766.7 1273.4 1800.0 1282.7 C1833.3 1292.1 1866.7 1300.8 1900.0 1310.0 C1933.3 1319.2 1966.7 1329.6 2000.0 1338.0 C2033.3 1346.4 2066.7 1352.5 2100.0 1360.3 C2133.3 1368.0 2166.7 1376.6 2200.0 1384.5 C2233.3 1392.3 2266.7 1400.2 2300.0 1407.4 C2333.3 1414.6 2370.8 1422.2 2400.0 1427.6 C2429.2 1433.0 2451.4 1436.7 2475.0 1439.7 C2498.6 1442.8 2521.7 1445.3 2541.4 1446.1 C2561.0 1446.9 2576.7 1446.5 2592.7 1444.5 C2608.8 1442.4 2621.7 1440.3 2637.7 1433.7 C2653.8 1427.2 2674.7 1415.5 2689.1 1405.3 C2703.5 1395.1 2715.3 1382.5 2724.2 1372.5 C2733.0 1362.5 2739.3 1349.8 2742.3 1345.3 L2749.0 1376.0 C2746.8 1380.7 2743.2 1392.7 2736.0 1404.0 C2728.8 1415.3 2720.2 1431.5 2706.0 1444.0 C2691.8 1456.5 2667.7 1470.2 2651.0 1479.0 C2634.3 1487.8 2622.7 1493.0 2606.0 1497.0 C2589.3 1501.0 2572.8 1502.3 2551.0 1503.0 C2529.2 1503.7 2500.2 1502.5 2475.0 1501.0 C2449.8 1499.5 2429.2 1497.5 2400.0 1494.0 C2370.8 1490.5 2333.3 1485.5 2300.0 1480.0 C2266.7 1474.5 2233.3 1467.8 2200.0 1461.0 C2166.7 1454.2 2133.3 1446.5 2100.0 1439.0 C2066.7 1431.5 2033.3 1423.8 2000.0 1416.0 C1966.7 1408.2 1933.3 1400.0 1900.0 1392.0 C1866.7 1384.0 1833.3 1376.3 1800.0 1368.0 C1766.7 1359.7 1733.3 1350.7 1700.0 1342.0 C1666.7 1333.3 1633.3 1324.9 1600.0 1316.0 C1566.7 1307.1 1533.3 1297.9 1500.0 1288.7 C1466.7 1279.5 1433.3 1270.3 1400.0 1261.0 C1366.7 1251.7 1333.3 1242.7 1300.0 1233.0 C1266.7 1223.3 1233.3 1213.2 1200.0 1203.0 C1166.7 1192.8 1133.3 1182.7 1100.0 1172.0 C1066.7 1161.3 1033.3 1150.5 1000.0 1139.0 C966.7 1127.5 933.3 1115.0 900.0 1103.0 C866.7 1091.0 833.3 1079.2 800.0 1067.0 C766.7 1054.8 733.3 1042.7 700.0 1030.0 C666.7 1017.3 633.3 1004.7 600.0 991.0 C566.7 977.3 533.3 962.8 500.0 948.0 C466.7 933.2 433.3 917.7 400.0 902.0 C366.7 886.3 327.0 867.8 300.0 854.0 C273.0 840.2 258.2 830.7 238.0 819.0 C217.8 807.3 198.8 796.6 179.0 784.0 C159.2 771.4 132.2 752.5 119.0 743.3 C105.8 734.1 106.2 735.8 99.5 729.0 C92.8 722.2 82.4 706.8 79.0 702.4 Z" fill="url(#rg6)"/>
<path d="M79.0 671.4 C82.4 675.0 92.8 686.9 99.5 692.9 C106.2 698.8 105.8 698.7 119.0 707.3 C132.2 715.9 159.2 733.3 179.0 744.5 C198.8 755.6 217.8 764.0 238.0 774.0 C258.2 784.0 273.0 792.0 300.0 804.2 C327.0 816.5 366.7 833.5 400.0 847.5 C433.3 861.4 466.7 874.3 500.0 887.7 C533.3 901.0 566.7 914.8 600.0 927.6 C633.3 940.3 666.7 952.7 700.0 964.2 C733.3 975.7 766.7 985.9 800.0 996.4 C833.3 1007.0 866.7 1016.5 900.0 1027.3 C933.3 1038.1 966.7 1050.5 1000.0 1061.3 C1033.3 1072.1 1066.7 1082.2 1100.0 1092.2 C1133.3 1102.3 1166.7 1111.9 1200.0 1121.5 C1233.3 1131.2 1266.7 1140.8 1300.0 1150.2 C1333.3 1159.5 1366.7 1168.7 1400.0 1177.8 C1433.3 1186.9 1466.7 1196.2 1500.0 1204.8 C1533.3 1213.4 1566.7 1220.6 1600.0 1229.4 C1633.3 1238.2 1666.7 1248.0 1700.0 1257.5 C1733.3 1266.9 1766.7 1276.9 1800.0 1286.2 C1833.3 1295.5 1866.7 1304.1 1900.0 1313.2 C1933.3 1322.4 1966.7 1332.7 2000.0 1341.0 C2033.3 1349.3 2066.7 1355.6 2100.0 1363.3 C2133.3 1371.0 2166.7 1379.6 2200.0 1387.4 C2233.3 1395.2 2266.7 1403.0 2300.0 1410.0 C2333.3 1417.1 2370.8 1424.6 2400.0 1429.9 C2429.2 1435.2 2451.4 1438.7 2475.0 1441.7 C2498.6 1444.7 2521.9 1447.1 2541.6 1447.8 C2561.3 1448.5 2577.1 1448.0 2593.2 1445.9 C2609.3 1443.7 2622.1 1441.4 2638.2 1434.7 C2654.3 1428.0 2675.4 1416.2 2689.8 1405.8 C2704.2 1395.5 2715.8 1382.7 2724.5 1372.6 C2733.3 1362.6 2739.4 1349.9 2742.3 1345.3 L2749.0 1376.0 C2746.8 1380.7 2743.2 1392.7 2736.0 1404.0 C2728.8 1415.3 2720.2 1431.5 2706.0 1444.0 C2691.8 1456.5 2667.7 1470.2 2651.0 1479.0 C2634.3 1487.8 2622.7 1493.0 2606.0 1497.0 C2589.3 1501.0 2572.8 1502.3 2551.0 1503.0 C2529.2 1503.7 2500.2 1502.5 2475.0 1501.0 C2449.8 1499.5 2429.2 1497.5 2400.0 1494.0 C2370.8 1490.5 2333.3 1485.5 2300.0 1480.0 C2266.7 1474.5 2233.3 1467.8 2200.0 1461.0 C2166.7 1454.2 2133.3 1446.5 2100.0 1439.0 C2066.7 1431.5 2033.3 1423.8 2000.0 1416.0 C1966.7 1408.2 1933.3 1400.0 1900.0 1392.0 C1866.7 1384.0 1833.3 1376.3 1800.0 1368.0 C1766.7 1359.7 1733.3 1350.7 1700.0 1342.0 C1666.7 1333.3 1633.3 1324.9 1600.0 1316.0 C1566.7 1307.1 1533.3 1297.9 1500.0 1288.7 C1466.7 1279.5 1433.3 1270.3 1400.0 1261.0 C1366.7 1251.7 1333.3 1242.7 1300.0 1233.0 C1266.7 1223.3 1233.3 1213.2 1200.0 1203.0 C1166.7 1192.8 1133.3 1182.7 1100.0 1172.0 C1066.7 1161.3 1033.3 1150.5 1000.0 1139.0 C966.7 1127.5 933.3 1115.0 900.0 1103.0 C866.7 1091.0 833.3 1079.2 800.0 1067.0 C766.7 1054.8 733.3 1042.7 700.0 1030.0 C666.7 1017.3 633.3 1004.7 600.0 991.0 C566.7 977.3 533.3 962.8 500.0 948.0 C466.7 933.2 433.3 917.7 400.0 902.0 C366.7 886.3 327.0 867.8 300.0 854.0 C273.0 840.2 258.2 830.7 238.0 819.0 C217.8 807.3 198.8 796.6 179.0 784.0 C159.2 771.4 132.2 752.5 119.0 743.3 C105.8 734.1 106.2 735.8 99.5 729.0 C92.8 722.2 82.4 706.8 79.0 702.4 Z" fill="url(#rg7)"/>
<path d="M79.0 671.5 C82.4 675.1 92.8 687.2 99.5 693.3 C106.2 699.3 105.8 699.1 119.0 707.7 C132.2 716.3 159.2 733.9 179.0 745.1 C198.8 756.3 217.8 764.9 238.0 775.0 C258.2 785.1 273.0 793.2 300.0 805.5 C327.0 817.9 366.7 835.1 400.0 849.1 C433.3 863.1 466.7 876.2 500.0 889.7 C533.3 903.1 566.7 917.0 600.0 929.8 C633.3 942.6 666.7 955.0 700.0 966.6 C733.3 978.1 766.7 988.5 800.0 999.1 C833.3 1009.8 866.7 1019.5 900.0 1030.4 C933.3 1041.2 966.7 1053.6 1000.0 1064.5 C1033.3 1075.3 1066.7 1085.5 1100.0 1095.5 C1133.3 1105.6 1166.7 1115.3 1200.0 1125.0 C1233.3 1134.6 1266.7 1144.3 1300.0 1153.7 C1333.3 1163.1 1366.7 1172.2 1400.0 1181.4 C1433.3 1190.5 1466.7 1199.8 1500.0 1208.4 C1533.3 1217.1 1566.7 1224.4 1600.0 1233.2 C1633.3 1242.0 1666.7 1251.7 1700.0 1261.1 C1733.3 1270.5 1766.7 1280.4 1800.0 1289.6 C1833.3 1298.9 1866.7 1307.4 1900.0 1316.5 C1933.3 1325.6 1966.7 1335.7 2000.0 1344.0 C2033.3 1352.3 2066.7 1358.7 2100.0 1366.4 C2133.3 1374.1 2166.7 1382.5 2200.0 1390.3 C2233.3 1398.0 2266.7 1405.7 2300.0 1412.7 C2333.3 1419.7 2370.8 1427.0 2400.0 1432.2 C2429.2 1437.3 2451.4 1440.8 2475.0 1443.6 C2498.6 1446.5 2522.0 1448.8 2541.8 1449.5 C2561.6 1450.1 2577.5 1449.6 2593.6 1447.3 C2609.8 1445.0 2622.5 1442.5 2638.6 1435.6 C2654.8 1428.8 2676.1 1416.8 2690.5 1406.4 C2704.8 1395.9 2716.3 1382.9 2724.9 1372.7 C2733.6 1362.6 2739.5 1349.9 2742.4 1345.4 L2749.0 1376.0 C2746.8 1380.7 2743.2 1392.7 2736.0 1404.0 C2728.8 1415.3 2720.2 1431.5 2706.0 1444.0 C2691.8 1456.5 2667.7 1470.2 2651.0 1479.0 C2634.3 1487.8 2622.7 1493.0 2606.0 1497.0 C2589.3 1501.0 2572.8 1502.3 2551.0 1503.0 C2529.2 1503.7 2500.2 1502.5 2475.0 1501.0 C2449.8 1499.5 2429.2 1497.5 2400.0 1494.0 C2370.8 1490.5 2333.3 1485.5 2300.0 1480.0 C2266.7 1474.5 2233.3 1467.8 2200.0 1461.0 C2166.7 1454.2 2133.3 1446.5 2100.0 1439.0 C2066.7 1431.5 2033.3 1423.8 2000.0 1416.0 C1966.7 1408.2 1933.3 1400.0 1900.0 1392.0 C1866.7 1384.0 1833.3 1376.3 1800.0 1368.0 C1766.7 1359.7 1733.3 1350.7 1700.0 1342.0 C1666.7 1333.3 1633.3 1324.9 1600.0 1316.0 C1566.7 1307.1 1533.3 1297.9 1500.0 1288.7 C1466.7 1279.5 1433.3 1270.3 1400.0 1261.0 C1366.7 1251.7 1333.3 1242.7 1300.0 1233.0 C1266.7 1223.3 1233.3 1213.2 1200.0 1203.0 C1166.7 1192.8 1133.3 1182.7 1100.0 1172.0 C1066.7 1161.3 1033.3 1150.5 1000.0 1139.0 C966.7 1127.5 933.3 1115.0 900.0 1103.0 C866.7 1091.0 833.3 1079.2 800.0 1067.0 C766.7 1054.8 733.3 1042.7 700.0 1030.0 C666.7 1017.3 633.3 1004.7 600.0 991.0 C566.7 977.3 533.3 962.8 500.0 948.0 C466.7 933.2 433.3 917.7 400.0 902.0 C366.7 886.3 327.0 867.8 300.0 854.0 C273.0 840.2 258.2 830.7 238.0 819.0 C217.8 807.3 198.8 796.6 179.0 784.0 C159.2 771.4 132.2 752.5 119.0 743.3 C105.8 734.1 106.2 735.8 99.5 729.0 C92.8 722.2 82.4 706.8 79.0 702.4 Z" fill="url(#rg8)"/>
<path d="M79.0 671.6 C82.4 675.3 92.8 687.6 99.5 693.7 C106.2 699.8 105.8 699.4 119.0 708.1 C132.2 716.8 159.2 734.4 179.0 745.7 C198.8 757.0 217.8 765.8 238.0 776.0 C258.2 786.2 273.0 794.4 300.0 806.9 C327.0 819.3 366.7 836.6 400.0 850.7 C433.3 864.9 466.7 878.2 500.0 891.7 C533.3 905.3 566.7 919.2 600.0 932.0 C633.3 944.9 666.7 957.3 700.0 969.0 C733.3 980.6 766.7 991.1 800.0 1001.8 C833.3 1012.6 866.7 1022.4 900.0 1033.4 C933.3 1044.4 966.7 1056.7 1000.0 1067.6 C1033.3 1078.5 1066.7 1088.7 1100.0 1098.9 C1133.3 1109.0 1166.7 1118.7 1200.0 1128.4 C1233.3 1138.1 1266.7 1147.8 1300.0 1157.2 C1333.3 1166.6 1366.7 1175.8 1400.0 1184.9 C1433.3 1194.0 1466.7 1203.3 1500.0 1212.0 C1533.3 1220.7 1566.7 1228.2 1600.0 1237.0 C1633.3 1245.7 1666.7 1255.4 1700.0 1264.7 C1733.3 1274.1 1766.7 1283.9 1800.0 1293.1 C1833.3 1302.3 1866.7 1310.8 1900.0 1319.8 C1933.3 1328.7 1966.7 1338.7 2000.0 1347.0 C2033.3 1355.3 2066.7 1361.7 2100.0 1369.4 C2133.3 1377.1 2166.7 1385.5 2200.0 1393.2 C2233.3 1400.8 2266.7 1408.5 2300.0 1415.4 C2333.3 1422.3 2370.8 1429.4 2400.0 1434.5 C2429.2 1439.5 2451.3 1442.8 2475.0 1445.6 C2498.7 1448.4 2522.2 1450.6 2542.0 1451.1 C2561.9 1451.7 2577.9 1451.1 2594.1 1448.7 C2610.3 1446.3 2622.9 1443.6 2639.1 1436.6 C2655.3 1429.6 2676.8 1417.5 2691.1 1406.9 C2705.5 1396.3 2716.7 1383.1 2725.3 1372.8 C2733.8 1362.6 2739.6 1350.0 2742.4 1345.4 L2749.0 1376.0 C2746.8 1380.7 2743.2 1392.7 2736.0 1404.0 C2728.8 1415.3 2720.2 1431.5 2706.0 1444.0 C2691.8 1456.5 2667.7 1470.2 2651.0 1479.0 C2634.3 1487.8 2622.7 1493.0 2606.0 1497.0 C2589.3 1501.0 2572.8 1502.3 2551.0 1503.0 C2529.2 1503.7 2500.2 1502.5 2475.0 1501.0 C2449.8 1499.5 2429.2 1497.5 2400.0 1494.0 C2370.8 1490.5 2333.3 1485.5 2300.0 1480.0 C2266.7 1474.5 2233.3 1467.8 2200.0 1461.0 C2166.7 1454.2 2133.3 1446.5 2100.0 1439.0 C2066.7 1431.5 2033.3 1423.8 2000.0 1416.0 C1966.7 1408.2 1933.3 1400.0 1900.0 1392.0 C1866.7 1384.0 1833.3 1376.3 1800.0 1368.0 C1766.7 1359.7 1733.3 1350.7 1700.0 1342.0 C1666.7 1333.3 1633.3 1324.9 1600.0 1316.0 C1566.7 1307.1 1533.3 1297.9 1500.0 1288.7 C1466.7 1279.5 1433.3 1270.3 1400.0 1261.0 C1366.7 1251.7 1333.3 1242.7 1300.0 1233.0 C1266.7 1223.3 1233.3 1213.2 1200.0 1203.0 C1166.7 1192.8 1133.3 1182.7 1100.0 1172.0 C1066.7 1161.3 1033.3 1150.5 1000.0 1139.0 C966.7 1127.5 933.3 1115.0 900.0 1103.0 C866.7 1091.0 833.3 1079.2 800.0 1067.0 C766.7 1054.8 733.3 1042.7 700.0 1030.0 C666.7 1017.3 633.3 1004.7 600.0 991.0 C566.7 977.3 533.3 962.8 500.0 948.0 C466.7 933.2 433.3 917.7 400.0 902.0 C366.7 886.3 327.0 867.8 300.0 854.0 C273.0 840.2 258.2 830.7 238.0 819.0 C217.8 807.3 198.8 796.6 179.0 784.0 C159.2 771.4 132.2 752.5 119.0 743.3 C105.8 734.1 106.2 735.8 99.5 729.0 C92.8 722.2 82.4 706.8 79.0 702.4 Z" fill="url(#rg9)"/>
<path d="M79.0 671.6 C82.4 675.4 92.8 687.9 99.5 694.1 C106.2 700.2 105.8 699.8 119.0 708.5 C132.2 717.2 159.2 734.9 179.0 746.4 C198.8 757.8 217.8 766.7 238.0 777.0 C258.2 787.3 273.0 795.6 300.0 808.2 C327.0 820.7 366.7 838.1 400.0 852.4 C433.3 866.6 466.7 880.1 500.0 893.7 C533.3 907.4 566.7 921.3 600.0 934.3 C633.3 947.2 666.7 959.7 700.0 971.4 C733.3 983.1 766.7 993.7 800.0 1004.5 C833.3 1015.4 866.7 1025.4 900.0 1036.5 C933.3 1047.5 966.7 1059.9 1000.0 1070.8 C1033.3 1081.8 1066.7 1092.0 1100.0 1102.2 C1133.3 1112.3 1166.7 1122.1 1200.0 1131.8 C1233.3 1141.6 1266.7 1151.3 1300.0 1160.7 C1333.3 1170.2 1366.7 1179.3 1400.0 1188.5 C1433.3 1197.6 1466.7 1206.9 1500.0 1215.6 C1533.3 1224.3 1566.7 1231.9 1600.0 1240.7 C1633.3 1249.5 1666.7 1259.1 1700.0 1268.4 C1733.3 1277.7 1766.7 1287.4 1800.0 1296.5 C1833.3 1305.7 1866.7 1314.1 1900.0 1323.0 C1933.3 1331.9 1966.7 1341.8 2000.0 1350.0 C2033.3 1358.2 2066.7 1364.8 2100.0 1372.5 C2133.3 1380.1 2166.7 1388.5 2200.0 1396.1 C2233.3 1403.7 2266.7 1411.3 2300.0 1418.0 C2333.3 1424.8 2370.8 1431.8 2400.0 1436.7 C2429.2 1441.6 2451.3 1444.9 2475.0 1447.5 C2498.7 1450.2 2522.3 1452.4 2542.3 1452.8 C2562.2 1453.2 2578.3 1452.6 2594.5 1450.1 C2610.8 1447.5 2623.3 1444.7 2639.5 1437.5 C2655.8 1430.4 2677.5 1418.2 2691.8 1407.5 C2706.2 1396.7 2717.2 1383.2 2725.6 1372.9 C2734.1 1362.6 2739.7 1350.0 2742.5 1345.5 L2749.0 1376.0 C2746.8 1380.7 2743.2 1392.7 2736.0 1404.0 C2728.8 1415.3 2720.2 1431.5 2706.0 1444.0 C2691.8 1456.5 2667.7 1470.2 2651.0 1479.0 C2634.3 1487.8 2622.7 1493.0 2606.0 1497.0 C2589.3 1501.0 2572.8 1502.3 2551.0 1503.0 C2529.2 1503.7 2500.2 1502.5 2475.0 1501.0 C2449.8 1499.5 2429.2 1497.5 2400.0 1494.0 C2370.8 1490.5 2333.3 1485.5 2300.0 1480.0 C2266.7 1474.5 2233.3 1467.8 2200.0 1461.0 C2166.7 1454.2 2133.3 1446.5 2100.0 1439.0 C2066.7 1431.5 2033.3 1423.8 2000.0 1416.0 C1966.7 1408.2 1933.3 1400.0 1900.0 1392.0 C1866.7 1384.0 1833.3 1376.3 1800.0 1368.0 C1766.7 1359.7 1733.3 1350.7 1700.0 1342.0 C1666.7 1333.3 1633.3 1324.9 1600.0 1316.0 C1566.7 1307.1 1533.3 1297.9 1500.0 1288.7 C1466.7 1279.5 1433.3 1270.3 1400.0 1261.0 C1366.7 1251.7 1333.3 1242.7 1300.0 1233.0 C1266.7 1223.3 1233.3 1213.2 1200.0 1203.0 C1166.7 1192.8 1133.3 1182.7 1100.0 1172.0 C1066.7 1161.3 1033.3 1150.5 1000.0 1139.0 C966.7 1127.5 933.3 1115.0 900.0 1103.0 C866.7 1091.0 833.3 1079.2 800.0 1067.0 C766.7 1054.8 733.3 1042.7 700.0 1030.0 C666.7 1017.3 633.3 1004.7 600.0 991.0 C566.7 977.3 533.3 962.8 500.0 948.0 C466.7 933.2 433.3 917.7 400.0 902.0 C366.7 886.3 327.0 867.8 300.0 854.0 C273.0 840.2 258.2 830.7 238.0 819.0 C217.8 807.3 198.8 796.6 179.0 784.0 C159.2 771.4 132.2 752.5 119.0 743.3 C105.8 734.1 106.2 735.8 99.5 729.0 C92.8 722.2 82.4 706.8 79.0 702.4 Z" fill="url(#rg10)"/>
<path d="M79.0 671.7 C82.4 675.5 92.8 688.3 99.5 694.5 C106.2 700.7 105.8 700.2 119.0 708.9 C132.2 717.7 159.2 735.5 179.0 747.0 C198.8 758.5 217.8 767.6 238.0 778.0 C258.2 788.4 273.0 796.8 300.0 809.5 C327.0 822.2 366.7 839.6 400.0 854.0 C433.3 868.4 466.7 882.0 500.0 895.8 C533.3 909.5 566.7 923.5 600.0 936.5 C633.3 949.5 666.7 962.0 700.0 973.8 C733.3 985.5 766.7 996.3 800.0 1007.2 C833.3 1018.2 866.7 1028.4 900.0 1039.5 C933.3 1050.6 966.7 1063.0 1000.0 1074.0 C1033.3 1085.0 1066.7 1095.3 1100.0 1105.5 C1133.3 1115.7 1166.7 1125.5 1200.0 1135.2 C1233.3 1145.0 1266.7 1154.8 1300.0 1164.2 C1333.3 1173.7 1366.7 1182.8 1400.0 1192.0 C1433.3 1201.2 1466.7 1210.5 1500.0 1219.2 C1533.3 1228.0 1566.7 1235.7 1600.0 1244.5 C1633.3 1253.3 1666.7 1262.8 1700.0 1272.0 C1733.3 1281.2 1766.7 1291.0 1800.0 1300.0 C1833.3 1309.0 1866.7 1317.4 1900.0 1326.2 C1933.3 1335.1 1966.7 1344.8 2000.0 1353.0 C2033.3 1361.2 2066.7 1367.8 2100.0 1375.5 C2133.3 1383.2 2166.7 1391.5 2200.0 1399.0 C2233.3 1406.5 2266.7 1414.0 2300.0 1420.7 C2333.3 1427.4 2370.8 1434.2 2400.0 1439.0 C2429.2 1443.8 2451.2 1446.9 2475.0 1449.5 C2498.8 1452.1 2522.5 1454.2 2542.5 1454.5 C2562.5 1454.8 2578.8 1454.2 2595.0 1451.5 C2611.2 1448.8 2623.8 1445.8 2640.0 1438.5 C2656.2 1431.2 2678.2 1418.9 2692.5 1408.0 C2706.8 1397.1 2717.7 1383.4 2726.0 1373.0 C2734.3 1362.6 2739.8 1350.1 2742.5 1345.5 L2749.0 1376.0 C2746.8 1380.7 2743.2 1392.7 2736.0 1404.0 C2728.8 1415.3 2720.2 1431.5 2706.0 1444.0 C2691.8 1456.5 2667.7 1470.2 2651.0 1479.0 C2634.3 1487.8 2622.7 1493.0 2606.0 1497.0 C2589.3 1501.0 2572.8 1502.3 2551.0 1503.0 C2529.2 1503.7 2500.2 1502.5 2475.0 1501.0 C2449.8 1499.5 2429.2 1497.5 2400.0 1494.0 C2370.8 1490.5 2333.3 1485.5 2300.0 1480.0 C2266.7 1474.5 2233.3 1467.8 2200.0 1461.0 C2166.7 1454.2 2133.3 1446.5 2100.0 1439.0 C2066.7 1431.5 2033.3 1423.8 2000.0 1416.0 C1966.7 1408.2 1933.3 1400.0 1900.0 1392.0 C1866.7 1384.0 1833.3 1376.3 1800.0 1368.0 C1766.7 1359.7 1733.3 1350.7 1700.0 1342.0 C1666.7 1333.3 1633.3 1324.9 1600.0 1316.0 C1566.7 1307.1 1533.3 1297.9 1500.0 1288.7 C1466.7 1279.5 1433.3 1270.3 1400.0 1261.0 C1366.7 1251.7 1333.3 1242.7 1300.0 1233.0 C1266.7 1223.3 1233.3 1213.2 1200.0 1203.0 C1166.7 1192.8 1133.3 1182.7 1100.0 1172.0 C1066.7 1161.3 1033.3 1150.5 1000.0 1139.0 C966.7 1127.5 933.3 1115.0 900.0 1103.0 C866.7 1091.0 833.3 1079.2 800.0 1067.0 C766.7 1054.8 733.3 1042.7 700.0 1030.0 C666.7 1017.3 633.3 1004.7 600.0 991.0 C566.7 977.3 533.3 962.8 500.0 948.0 C466.7 933.2 433.3 917.7 400.0 902.0 C366.7 886.3 327.0 867.8 300.0 854.0 C273.0 840.2 258.2 830.7 238.0 819.0 C217.8 807.3 198.8 796.6 179.0 784.0 C159.2 771.4 132.2 752.5 119.0 743.3 C105.8 734.1 106.2 735.8 99.5 729.0 C92.8 722.2 82.4 706.8 79.0 702.4 Z" fill="url(#rg11)"/>
<path d="M79.0 671.8 C82.4 675.6 92.8 688.7 99.5 694.9 C106.2 701.2 105.8 700.5 119.0 709.3 C132.2 718.1 159.2 736.0 179.0 747.6 C198.8 759.3 217.8 768.5 238.0 779.0 C258.2 789.5 273.0 798.0 300.0 810.8 C327.0 823.6 366.7 841.1 400.0 855.6 C433.3 870.1 466.7 883.9 500.0 897.8 C533.3 911.6 566.7 925.7 600.0 938.7 C633.3 951.8 666.7 964.3 700.0 976.1 C733.3 988.0 766.7 998.9 800.0 1010.0 C833.3 1021.0 866.7 1031.3 900.0 1042.5 C933.3 1053.8 966.7 1066.1 1000.0 1077.2 C1033.3 1088.2 1066.7 1098.6 1100.0 1108.8 C1133.3 1119.1 1166.7 1128.9 1200.0 1138.7 C1233.3 1148.5 1266.7 1158.3 1300.0 1167.8 C1333.3 1177.2 1366.7 1186.4 1400.0 1195.5 C1433.3 1204.7 1466.7 1214.0 1500.0 1222.8 C1533.3 1231.6 1566.7 1239.5 1600.0 1248.3 C1633.3 1257.1 1666.7 1266.4 1700.0 1275.6 C1733.3 1284.8 1766.7 1294.5 1800.0 1303.5 C1833.3 1312.4 1866.7 1320.7 1900.0 1329.5 C1933.3 1338.3 1966.7 1347.8 2000.0 1356.0 C2033.3 1364.2 2066.7 1370.9 2100.0 1378.5 C2133.3 1386.2 2166.7 1394.4 2200.0 1401.9 C2233.3 1409.4 2266.7 1416.8 2300.0 1423.4 C2333.3 1429.9 2370.8 1436.6 2400.0 1441.3 C2429.2 1446.0 2451.2 1449.0 2475.0 1451.5 C2498.8 1453.9 2522.7 1455.9 2542.7 1456.2 C2562.8 1456.4 2579.2 1455.7 2595.5 1452.9 C2611.7 1450.1 2624.2 1446.8 2640.5 1439.5 C2656.7 1432.1 2678.9 1419.6 2693.2 1408.5 C2707.5 1397.5 2718.1 1383.6 2726.4 1373.1 C2734.6 1362.6 2739.8 1350.1 2742.5 1345.5 L2749.0 1376.0 C2746.8 1380.7 2743.2 1392.7 2736.0 1404.0 C2728.8 1415.3 2720.2 1431.5 2706.0 1444.0 C2691.8 1456.5 2667.7 1470.2 2651.0 1479.0 C2634.3 1487.8 2622.7 1493.0 2606.0 1497.0 C2589.3 1501.0 2572.8 1502.3 2551.0 1503.0 C2529.2 1503.7 2500.2 1502.5 2475.0 1501.0 C2449.8 1499.5 2429.2 1497.5 2400.0 1494.0 C2370.8 1490.5 2333.3 1485.5 2300.0 1480.0 C2266.7 1474.5 2233.3 1467.8 2200.0 1461.0 C2166.7 1454.2 2133.3 1446.5 2100.0 1439.0 C2066.7 1431.5 2033.3 1423.8 2000.0 1416.0 C1966.7 1408.2 1933.3 1400.0 1900.0 1392.0 C1866.7 1384.0 1833.3 1376.3 1800.0 1368.0 C1766.7 1359.7 1733.3 1350.7 1700.0 1342.0 C1666.7 1333.3 1633.3 1324.9 1600.0 1316.0 C1566.7 1307.1 1533.3 1297.9 1500.0 1288.7 C1466.7 1279.5 1433.3 1270.3 1400.0 1261.0 C1366.7 1251.7 1333.3 1242.7 1300.0 1233.0 C1266.7 1223.3 1233.3 1213.2 1200.0 1203.0 C1166.7 1192.8 1133.3 1182.7 1100.0 1172.0 C1066.7 1161.3 1033.3 1150.5 1000.0 1139.0 C966.7 1127.5 933.3 1115.0 900.0 1103.0 C866.7 1091.0 833.3 1079.2 800.0 1067.0 C766.7 1054.8 733.3 1042.7 700.0 1030.0 C666.7 1017.3 633.3 1004.7 600.0 991.0 C566.7 977.3 533.3 962.8 500.0 948.0 C466.7 933.2 433.3 917.7 400.0 902.0 C366.7 886.3 327.0 867.8 300.0 854.0 C273.0 840.2 258.2 830.7 238.0 819.0 C217.8 807.3 198.8 796.6 179.0 784.0 C159.2 771.4 132.2 752.5 119.0 743.3 C105.8 734.1 106.2 735.8 99.5 729.0 C92.8 722.2 82.4 706.8 79.0 702.4 Z" fill="url(#rg12)"/>
<path d="M79.0 671.8 C82.4 675.7 92.8 689.0 99.5 695.3 C106.2 701.6 105.8 700.9 119.0 709.7 C132.2 718.5 159.2 736.6 179.0 748.3 C198.8 760.0 217.8 769.4 238.0 780.0 C258.2 790.6 273.0 799.3 300.0 812.1 C327.0 825.0 366.7 842.7 400.0 857.3 C433.3 871.9 466.7 885.8 500.0 899.8 C533.3 913.7 566.7 927.8 600.0 941.0 C633.3 954.1 666.7 966.6 700.0 978.5 C733.3 990.5 766.7 1001.5 800.0 1012.7 C833.3 1023.8 866.7 1034.3 900.0 1045.6 C933.3 1056.9 966.7 1069.3 1000.0 1080.4 C1033.3 1091.5 1066.7 1101.8 1100.0 1112.1 C1133.3 1122.4 1166.7 1132.3 1200.0 1142.1 C1233.3 1152.0 1266.7 1161.8 1300.0 1171.3 C1333.3 1180.8 1366.7 1189.9 1400.0 1199.1 C1433.3 1208.3 1466.7 1217.6 1500.0 1226.4 C1533.3 1235.2 1566.7 1243.2 1600.0 1252.0 C1633.3 1260.9 1666.7 1270.1 1700.0 1279.3 C1733.3 1288.4 1766.7 1298.0 1800.0 1306.9 C1833.3 1315.8 1866.7 1324.1 1900.0 1332.8 C1933.3 1341.4 1966.7 1350.9 2000.0 1359.0 C2033.3 1367.1 2066.7 1374.0 2100.0 1381.6 C2133.3 1389.2 2166.7 1397.4 2200.0 1404.8 C2233.3 1412.2 2266.7 1419.6 2300.0 1426.0 C2333.3 1432.5 2370.8 1439.0 2400.0 1443.5 C2429.2 1448.1 2451.2 1451.0 2475.0 1453.4 C2498.8 1455.8 2522.8 1457.7 2543.0 1457.9 C2563.1 1458.0 2579.6 1457.2 2595.9 1454.3 C2612.2 1451.4 2624.6 1447.9 2640.9 1440.4 C2657.2 1432.9 2679.6 1420.3 2693.9 1409.1 C2708.2 1397.9 2718.6 1383.8 2726.7 1373.2 C2734.8 1362.6 2739.9 1350.2 2742.6 1345.6 L2749.0 1376.0 C2746.8 1380.7 2743.2 1392.7 2736.0 1404.0 C2728.8 1415.3 2720.2 1431.5 2706.0 1444.0 C2691.8 1456.5 2667.7 1470.2 2651.0 1479.0 C2634.3 1487.8 2622.7 1493.0 2606.0 1497.0 C2589.3 1501.0 2572.8 1502.3 2551.0 1503.0 C2529.2 1503.7 2500.2 1502.5 2475.0 1501.0 C2449.8 1499.5 2429.2 1497.5 2400.0 1494.0 C2370.8 1490.5 2333.3 1485.5 2300.0 1480.0 C2266.7 1474.5 2233.3 1467.8 2200.0 1461.0 C2166.7 1454.2 2133.3 1446.5 2100.0 1439.0 C2066.7 1431.5 2033.3 1423.8 2000.0 1416.0 C1966.7 1408.2 1933.3 1400.0 1900.0 1392.0 C1866.7 1384.0 1833.3 1376.3 1800.0 1368.0 C1766.7 1359.7 1733.3 1350.7 1700.0 1342.0 C1666.7 1333.3 1633.3 1324.9 1600.0 1316.0 C1566.7 1307.1 1533.3 1297.9 1500.0 1288.7 C1466.7 1279.5 1433.3 1270.3 1400.0 1261.0 C1366.7 1251.7 1333.3 1242.7 1300.0 1233.0 C1266.7 1223.3 1233.3 1213.2 1200.0 1203.0 C1166.7 1192.8 1133.3 1182.7 1100.0 1172.0 C1066.7 1161.3 1033.3 1150.5 1000.0 1139.0 C966.7 1127.5 933.3 1115.0 900.0 1103.0 C866.7 1091.0 833.3 1079.2 800.0 1067.0 C766.7 1054.8 733.3 1042.7 700.0 1030.0 C666.7 1017.3 633.3 1004.7 600.0 991.0 C566.7 977.3 533.3 962.8 500.0 948.0 C466.7 933.2 433.3 917.7 400.0 902.0 C366.7 886.3 327.0 867.8 300.0 854.0 C273.0 840.2 258.2 830.7 238.0 819.0 C217.8 807.3 198.8 796.6 179.0 784.0 C159.2 771.4 132.2 752.5 119.0 743.3 C105.8 734.1 106.2 735.8 99.5 729.0 C92.8 722.2 82.4 706.8 79.0 702.4 Z" fill="url(#rg13)"/>
<path d="M79.0 671.9 C82.4 675.9 92.8 689.4 99.5 695.7 C106.2 702.1 105.8 701.2 119.0 710.1 C132.2 719.0 159.2 737.1 179.0 748.9 C198.8 760.7 217.8 770.2 238.0 781.0 C258.2 791.8 273.0 800.5 300.0 813.5 C327.0 826.4 366.7 844.2 400.0 858.9 C433.3 873.6 466.7 887.8 500.0 901.8 C533.3 915.9 566.7 930.0 600.0 943.2 C633.3 956.4 666.7 968.9 700.0 980.9 C733.3 992.9 766.7 1004.1 800.0 1015.4 C833.3 1026.7 866.7 1037.3 900.0 1048.6 C933.3 1060.0 966.7 1072.4 1000.0 1083.5 C1033.3 1094.7 1066.7 1105.1 1100.0 1115.5 C1133.3 1125.8 1166.7 1135.7 1200.0 1145.5 C1233.3 1155.4 1266.7 1165.3 1300.0 1174.8 C1333.3 1184.3 1366.7 1193.4 1400.0 1202.6 C1433.3 1211.8 1466.7 1221.1 1500.0 1230.0 C1533.3 1238.8 1566.7 1247.0 1600.0 1255.8 C1633.3 1264.6 1666.7 1273.8 1700.0 1282.9 C1733.3 1292.0 1766.7 1301.5 1800.0 1310.4 C1833.3 1319.2 1866.7 1327.4 1900.0 1336.0 C1933.3 1344.6 1966.7 1353.9 2000.0 1362.0 C2033.3 1370.1 2066.7 1377.0 2100.0 1384.6 C2133.3 1392.3 2166.7 1400.4 2200.0 1407.7 C2233.3 1415.1 2266.7 1422.3 2300.0 1428.7 C2333.3 1435.0 2370.8 1441.4 2400.0 1445.8 C2429.2 1450.3 2451.1 1453.1 2475.0 1455.4 C2498.9 1457.7 2523.0 1459.5 2543.2 1459.5 C2563.4 1459.6 2580.0 1458.8 2596.4 1455.7 C2612.7 1452.7 2625.0 1449.0 2641.4 1441.4 C2657.7 1433.7 2680.3 1421.0 2694.5 1409.6 C2708.8 1398.3 2719.1 1383.9 2727.1 1373.3 C2735.1 1362.6 2740.0 1350.2 2742.6 1345.6 L2749.0 1376.0 C2746.8 1380.7 2743.2 1392.7 2736.0 1404.0 C2728.8 1415.3 2720.2 1431.5 2706.0 1444.0 C2691.8 1456.5 2667.7 1470.2 2651.0 1479.0 C2634.3 1487.8 2622.7 1493.0 2606.0 1497.0 C2589.3 1501.0 2572.8 1502.3 2551.0 1503.0 C2529.2 1503.7 2500.2 1502.5 2475.0 1501.0 C2449.8 1499.5 2429.2 1497.5 2400.0 1494.0 C2370.8 1490.5 2333.3 1485.5 2300.0 1480.0 C2266.7 1474.5 2233.3 1467.8 2200.0 1461.0 C2166.7 1454.2 2133.3 1446.5 2100.0 1439.0 C2066.7 1431.5 2033.3 1423.8 2000.0 1416.0 C1966.7 1408.2 1933.3 1400.0 1900.0 1392.0 C1866.7 1384.0 1833.3 1376.3 1800.0 1368.0 C1766.7 1359.7 1733.3 1350.7 1700.0 1342.0 C1666.7 1333.3 1633.3 1324.9 1600.0 1316.0 C1566.7 1307.1 1533.3 1297.9 1500.0 1288.7 C1466.7 1279.5 1433.3 1270.3 1400.0 1261.0 C1366.7 1251.7 1333.3 1242.7 1300.0 1233.0 C1266.7 1223.3 1233.3 1213.2 1200.0 1203.0 C1166.7 1192.8 1133.3 1182.7 1100.0 1172.0 C1066.7 1161.3 1033.3 1150.5 1000.0 1139.0 C966.7 1127.5 933.3 1115.0 900.0 1103.0 C866.7 1091.0 833.3 1079.2 800.0 1067.0 C766.7 1054.8 733.3 1042.7 700.0 1030.0 C666.7 1017.3 633.3 1004.7 600.0 991.0 C566.7 977.3 533.3 962.8 500.0 948.0 C466.7 933.2 433.3 917.7 400.0 902.0 C366.7 886.3 327.0 867.8 300.0 854.0 C273.0 840.2 258.2 830.7 238.0 819.0 C217.8 807.3 198.8 796.6 179.0 784.0 C159.2 771.4 132.2 752.5 119.0 743.3 C105.8 734.1 106.2 735.8 99.5 729.0 C92.8 722.2 82.4 706.8 79.0 702.4 Z" fill="url(#rg14)"/>
<path d="M79.0 672.0 C82.4 676.0 92.8 689.7 99.5 696.1 C106.2 702.6 105.8 701.6 119.0 710.5 C132.2 719.4 159.2 737.6 179.0 749.5 C198.8 761.5 217.8 771.1 238.0 782.0 C258.2 792.9 273.0 801.7 300.0 814.8 C327.0 827.9 366.7 845.7 400.0 860.5 C433.3 875.4 466.7 889.7 500.0 903.8 C533.3 918.0 566.7 932.2 600.0 945.4 C633.3 958.7 666.7 971.2 700.0 983.3 C733.3 995.4 766.7 1006.7 800.0 1018.1 C833.3 1029.5 866.7 1040.2 900.0 1051.7 C933.3 1063.1 966.7 1075.5 1000.0 1086.7 C1033.3 1097.9 1066.7 1108.4 1100.0 1118.8 C1133.3 1129.1 1166.7 1139.0 1200.0 1149.0 C1233.3 1158.9 1266.7 1168.8 1300.0 1178.3 C1333.3 1187.9 1366.7 1197.0 1400.0 1206.2 C1433.3 1215.4 1466.7 1224.7 1500.0 1233.6 C1533.3 1242.5 1566.7 1250.8 1600.0 1259.6 C1633.3 1268.4 1666.7 1277.5 1700.0 1286.5 C1733.3 1295.6 1766.7 1305.0 1800.0 1313.8 C1833.3 1322.6 1866.7 1330.7 1900.0 1339.2 C1933.3 1347.8 1966.7 1356.9 2000.0 1365.0 C2033.3 1373.1 2066.7 1380.1 2100.0 1387.7 C2133.3 1395.3 2166.7 1403.4 2200.0 1410.6 C2233.3 1417.9 2266.7 1425.1 2300.0 1431.4 C2333.3 1437.6 2370.8 1443.8 2400.0 1448.1 C2429.2 1452.4 2451.1 1455.1 2475.0 1457.3 C2498.9 1459.5 2523.1 1461.3 2543.4 1461.2 C2563.7 1461.2 2580.4 1460.3 2596.8 1457.1 C2613.2 1454.0 2625.4 1450.1 2641.8 1442.3 C2658.2 1434.5 2681.0 1421.7 2695.2 1410.2 C2709.5 1398.7 2719.5 1384.1 2727.5 1373.4 C2735.4 1362.6 2740.1 1350.3 2742.7 1345.7 L2749.0 1376.0 C2746.8 1380.7 2743.2 1392.7 2736.0 1404.0 C2728.8 1415.3 2720.2 1431.5 2706.0 1444.0 C2691.8 1456.5 2667.7 1470.2 2651.0 1479.0 C2634.3 1487.8 2622.7 1493.0 2606.0 1497.0 C2589.3 1501.0 2572.8 1502.3 2551.0 1503.0 C2529.2 1503.7 2500.2 1502.5 2475.0 1501.0 C2449.8 1499.5 2429.2 1497.5 2400.0 1494.0 C2370.8 1490.5 2333.3 1485.5 2300.0 1480.0 C2266.7 1474.5 2233.3 1467.8 2200.0 1461.0 C2166.7 1454.2 2133.3 1446.5 2100.0 1439.0 C2066.7 1431.5 2033.3 1423.8 2000.0 1416.0 C1966.7 1408.2 1933.3 1400.0 1900.0 1392.0 C1866.7 1384.0 1833.3 1376.3 1800.0 1368.0 C1766.7 1359.7 1733.3 1350.7 1700.0 1342.0 C1666.7 1333.3 1633.3 1324.9 1600.0 1316.0 C1566.7 1307.1 1533.3 1297.9 1500.0 1288.7 C1466.7 1279.5 1433.3 1270.3 1400.0 1261.0 C1366.7 1251.7 1333.3 1242.7 1300.0 1233.0 C1266.7 1223.3 1233.3 1213.2 1200.0 1203.0 C1166.7 1192.8 1133.3 1182.7 1100.0 1172.0 C1066.7 1161.3 1033.3 1150.5 1000.0 1139.0 C966.7 1127.5 933.3 1115.0 900.0 1103.0 C866.7 1091.0 833.3 1079.2 800.0 1067.0 C766.7 1054.8 733.3 1042.7 700.0 1030.0 C666.7 1017.3 633.3 1004.7 600.0 991.0 C566.7 977.3 533.3 962.8 500.0 948.0 C466.7 933.2 433.3 917.7 400.0 902.0 C366.7 886.3 327.0 867.8 300.0 854.0 C273.0 840.2 258.2 830.7 238.0 819.0 C217.8 807.3 198.8 796.6 179.0 784.0 C159.2 771.4 132.2 752.5 119.0 743.3 C105.8 734.1 106.2 735.8 99.5 729.0 C92.8 722.2 82.4 706.8 79.0 702.4 Z" fill="url(#rg15)"/>
<path d="M79.0 672.0 C82.4 676.1 92.8 690.1 99.5 696.5 C106.2 703.0 105.8 702.0 119.0 710.9 C132.2 719.9 159.2 738.2 179.0 750.2 C198.8 762.2 217.8 772.0 238.0 783.0 C258.2 794.0 273.0 802.9 300.0 816.1 C327.0 829.3 366.7 847.2 400.0 862.2 C433.3 877.1 466.7 891.6 500.0 905.9 C533.3 920.1 566.7 934.3 600.0 947.6 C633.3 960.9 666.7 973.5 700.0 985.7 C733.3 997.9 766.7 1009.3 800.0 1020.8 C833.3 1032.3 866.7 1043.2 900.0 1054.7 C933.3 1066.2 966.7 1078.7 1000.0 1089.9 C1033.3 1101.1 1066.7 1111.7 1100.0 1122.1 C1133.3 1132.5 1166.7 1142.4 1200.0 1152.4 C1233.3 1162.4 1266.7 1172.3 1300.0 1181.9 C1333.3 1191.4 1366.7 1200.5 1400.0 1209.7 C1433.3 1218.9 1466.7 1228.2 1500.0 1237.2 C1533.3 1246.1 1566.7 1254.5 1600.0 1263.4 C1633.3 1272.2 1666.7 1281.2 1700.0 1290.2 C1733.3 1299.2 1766.7 1308.6 1800.0 1317.3 C1833.3 1326.0 1866.7 1334.0 1900.0 1342.5 C1933.3 1351.0 1966.7 1360.0 2000.0 1368.0 C2033.3 1376.0 2066.7 1383.1 2100.0 1390.7 C2133.3 1398.3 2166.7 1406.3 2200.0 1413.5 C2233.3 1420.8 2266.7 1427.9 2300.0 1434.0 C2333.3 1440.2 2370.8 1446.2 2400.0 1450.4 C2429.2 1454.6 2451.1 1457.2 2475.0 1459.3 C2498.9 1461.4 2523.3 1463.0 2543.6 1462.9 C2564.0 1462.8 2580.8 1461.8 2597.3 1458.5 C2613.7 1455.3 2625.8 1451.2 2642.3 1443.3 C2658.7 1435.3 2681.7 1422.4 2695.9 1410.7 C2710.2 1399.1 2720.0 1384.3 2727.8 1373.5 C2735.6 1362.6 2740.2 1350.3 2742.7 1345.7 L2749.0 1376.0 C2746.8 1380.7 2743.2 1392.7 2736.0 1404.0 C2728.8 1415.3 2720.2 1431.5 2706.0 1444.0 C2691.8 1456.5 2667.7 1470.2 2651.0 1479.0 C2634.3 1487.8 2622.7 1493.0 2606.0 1497.0 C2589.3 1501.0 2572.8 1502.3 2551.0 1503.0 C2529.2 1503.7 2500.2 1502.5 2475.0 1501.0 C2449.8 1499.5 2429.2 1497.5 2400.0 1494.0 C2370.8 1490.5 2333.3 1485.5 2300.0 1480.0 C2266.7 1474.5 2233.3 1467.8 2200.0 1461.0 C2166.7 1454.2 2133.3 1446.5 2100.0 1439.0 C2066.7 1431.5 2033.3 1423.8 2000.0 1416.0 C1966.7 1408.2 1933.3 1400.0 1900.0 1392.0 C1866.7 1384.0 1833.3 1376.3 1800.0 1368.0 C1766.7 1359.7 1733.3 1350.7 1700.0 1342.0 C1666.7 1333.3 1633.3 1324.9 1600.0 1316.0 C1566.7 1307.1 1533.3 1297.9 1500.0 1288.7 C1466.7 1279.5 1433.3 1270.3 1400.0 1261.0 C1366.7 1251.7 1333.3 1242.7 1300.0 1233.0 C1266.7 1223.3 1233.3 1213.2 1200.0 1203.0 C1166.7 1192.8 1133.3 1182.7 1100.0 1172.0 C1066.7 1161.3 1033.3 1150.5 1000.0 1139.0 C966.7 1127.5 933.3 1115.0 900.0 1103.0 C866.7 1091.0 833.3 1079.2 800.0 1067.0 C766.7 1054.8 733.3 1042.7 700.0 1030.0 C666.7 1017.3 633.3 1004.7 600.0 991.0 C566.7 977.3 533.3 962.8 500.0 948.0 C466.7 933.2 433.3 917.7 400.0 902.0 C366.7 886.3 327.0 867.8 300.0 854.0 C273.0 840.2 258.2 830.7 238.0 819.0 C217.8 807.3 198.8 796.6 179.0 784.0 C159.2 771.4 132.2 752.5 119.0 743.3 C105.8 734.1 106.2 735.8 99.5 729.0 C92.8 722.2 82.4 706.8 79.0 702.4 Z" fill="url(#rg16)"/>
<path d="M79.0 672.1 C82.4 676.2 92.8 690.4 99.5 697.0 C106.2 703.5 105.8 702.3 119.0 711.3 C132.2 720.3 159.2 738.7 179.0 750.8 C198.8 762.9 217.8 772.9 238.0 784.0 C258.2 795.1 273.0 804.1 300.0 817.4 C327.0 830.7 366.7 848.7 400.0 863.8 C433.3 878.9 466.7 893.5 500.0 907.9 C533.3 922.2 566.7 936.5 600.0 949.9 C633.3 963.2 666.7 975.8 700.0 988.1 C733.3 1000.3 766.7 1011.9 800.0 1023.5 C833.3 1035.1 866.7 1046.2 900.0 1057.8 C933.3 1069.4 966.7 1081.8 1000.0 1093.1 C1033.3 1104.4 1066.7 1115.0 1100.0 1125.4 C1133.3 1135.9 1166.7 1145.8 1200.0 1155.8 C1233.3 1165.8 1266.7 1175.8 1300.0 1185.4 C1333.3 1195.0 1366.7 1204.0 1400.0 1213.3 C1433.3 1222.5 1466.7 1231.8 1500.0 1240.7 C1533.3 1249.7 1566.7 1258.3 1600.0 1267.1 C1633.3 1276.0 1666.7 1284.9 1700.0 1293.8 C1733.3 1302.8 1766.7 1312.1 1800.0 1320.7 C1833.3 1329.4 1866.7 1337.4 1900.0 1345.8 C1933.3 1354.1 1966.7 1363.0 2000.0 1371.0 C2033.3 1379.0 2066.7 1386.2 2100.0 1393.8 C2133.3 1401.3 2166.7 1409.3 2200.0 1416.5 C2233.3 1423.6 2266.7 1430.7 2300.0 1436.7 C2333.3 1442.7 2370.8 1448.5 2400.0 1452.6 C2429.2 1456.7 2451.0 1459.2 2475.0 1461.2 C2499.0 1463.2 2523.4 1464.8 2543.9 1464.6 C2564.3 1464.4 2581.2 1463.3 2597.7 1460.0 C2614.2 1456.6 2626.2 1452.3 2642.7 1444.2 C2659.2 1436.1 2682.3 1423.1 2696.6 1411.3 C2710.8 1399.5 2720.5 1384.5 2728.2 1373.5 C2735.9 1362.6 2740.3 1350.4 2742.8 1345.8 L2749.0 1376.0 C2746.8 1380.7 2743.2 1392.7 2736.0 1404.0 C2728.8 1415.3 2720.2 1431.5 2706.0 1444.0 C2691.8 1456.5 2667.7 1470.2 2651.0 1479.0 C2634.3 1487.8 2622.7 1493.0 2606.0 1497.0 C2589.3 1501.0 2572.8 1502.3 2551.0 1503.0 C2529.2 1503.7 2500.2 1502.5 2475.0 1501.0 C2449.8 1499.5 2429.2 1497.5 2400.0 1494.0 C2370.8 1490.5 2333.3 1485.5 2300.0 1480.0 C2266.7 1474.5 2233.3 1467.8 2200.0 1461.0 C2166.7 1454.2 2133.3 1446.5 2100.0 1439.0 C2066.7 1431.5 2033.3 1423.8 2000.0 1416.0 C1966.7 1408.2 1933.3 1400.0 1900.0 1392.0 C1866.7 1384.0 1833.3 1376.3 1800.0 1368.0 C1766.7 1359.7 1733.3 1350.7 1700.0 1342.0 C1666.7 1333.3 1633.3 1324.9 1600.0 1316.0 C1566.7 1307.1 1533.3 1297.9 1500.0 1288.7 C1466.7 1279.5 1433.3 1270.3 1400.0 1261.0 C1366.7 1251.7 1333.3 1242.7 1300.0 1233.0 C1266.7 1223.3 1233.3 1213.2 1200.0 1203.0 C1166.7 1192.8 1133.3 1182.7 1100.0 1172.0 C1066.7 1161.3 1033.3 1150.5 1000.0 1139.0 C966.7 1127.5 933.3 1115.0 900.0 1103.0 C866.7 1091.0 833.3 1079.2 800.0 1067.0 C766.7 1054.8 733.3 1042.7 700.0 1030.0 C666.7 1017.3 633.3 1004.7 600.0 991.0 C566.7 977.3 533.3 962.8 500.0 948.0 C466.7 933.2 433.3 917.7 400.0 902.0 C366.7 886.3 327.0 867.8 300.0 854.0 C273.0 840.2 258.2 830.7 238.0 819.0 C217.8 807.3 198.8 796.6 179.0 784.0 C159.2 771.4 132.2 752.5 119.0 743.3 C105.8 734.1 106.2 735.8 99.5 729.0 C92.8 722.2 82.4 706.8 79.0 702.4 Z" fill="url(#rg17)"/>
<path d="M79.0 672.1 C82.4 676.3 92.8 690.8 99.5 697.4 C106.2 704.0 105.8 702.7 119.0 711.7 C132.2 720.7 159.2 739.2 179.0 751.5 C198.8 763.7 217.8 773.8 238.0 785.0 C258.2 796.2 273.0 805.3 300.0 818.7 C327.0 832.1 366.7 850.3 400.0 865.5 C433.3 880.7 466.7 895.5 500.0 909.9 C533.3 924.3 566.7 938.7 600.0 952.1 C633.3 965.5 666.7 978.1 700.0 990.5 C733.3 1002.8 766.7 1014.5 800.0 1026.2 C833.3 1037.9 866.7 1049.1 900.0 1060.8 C933.3 1072.5 966.7 1085.0 1000.0 1096.3 C1033.3 1107.6 1066.7 1118.2 1100.0 1128.7 C1133.3 1139.2 1166.7 1149.2 1200.0 1159.3 C1233.3 1169.3 1266.7 1179.3 1300.0 1188.9 C1333.3 1198.5 1366.7 1207.6 1400.0 1216.8 C1433.3 1226.1 1466.7 1235.3 1500.0 1244.3 C1533.3 1253.4 1566.7 1262.1 1600.0 1270.9 C1633.3 1279.8 1666.7 1288.6 1700.0 1297.5 C1733.3 1306.3 1766.7 1315.6 1800.0 1324.2 C1833.3 1332.8 1866.7 1340.7 1900.0 1349.0 C1933.3 1357.3 1966.7 1366.0 2000.0 1374.0 C2033.3 1382.0 2066.7 1389.3 2100.0 1396.8 C2133.3 1404.4 2166.7 1412.3 2200.0 1419.4 C2233.3 1426.5 2266.7 1433.4 2300.0 1439.3 C2333.3 1445.3 2370.8 1450.9 2400.0 1454.9 C2429.2 1458.9 2451.0 1461.3 2475.0 1463.2 C2499.0 1465.1 2523.6 1466.6 2544.1 1466.3 C2564.6 1466.0 2581.7 1464.9 2598.2 1461.4 C2614.7 1457.8 2626.7 1453.4 2643.2 1445.2 C2659.7 1436.9 2683.0 1423.7 2697.3 1411.8 C2711.5 1399.9 2721.0 1384.6 2728.5 1373.6 C2736.1 1362.6 2740.4 1350.5 2742.8 1345.8 L2749.0 1376.0 C2746.8 1380.7 2743.2 1392.7 2736.0 1404.0 C2728.8 1415.3 2720.2 1431.5 2706.0 1444.0 C2691.8 1456.5 2667.7 1470.2 2651.0 1479.0 C2634.3 1487.8 2622.7 1493.0 2606.0 1497.0 C2589.3 1501.0 2572.8 1502.3 2551.0 1503.0 C2529.2 1503.7 2500.2 1502.5 2475.0 1501.0 C2449.8 1499.5 2429.2 1497.5 2400.0 1494.0 C2370.8 1490.5 2333.3 1485.5 2300.0 1480.0 C2266.7 1474.5 2233.3 1467.8 2200.0 1461.0 C2166.7 1454.2 2133.3 1446.5 2100.0 1439.0 C2066.7 1431.5 2033.3 1423.8 2000.0 1416.0 C1966.7 1408.2 1933.3 1400.0 1900.0 1392.0 C1866.7 1384.0 1833.3 1376.3 1800.0 1368.0 C1766.7 1359.7 1733.3 1350.7 1700.0 1342.0 C1666.7 1333.3 1633.3 1324.9 1600.0 1316.0 C1566.7 1307.1 1533.3 1297.9 1500.0 1288.7 C1466.7 1279.5 1433.3 1270.3 1400.0 1261.0 C1366.7 1251.7 1333.3 1242.7 1300.0 1233.0 C1266.7 1223.3 1233.3 1213.2 1200.0 1203.0 C1166.7 1192.8 1133.3 1182.7 1100.0 1172.0 C1066.7 1161.3 1033.3 1150.5 1000.0 1139.0 C966.7 1127.5 933.3 1115.0 900.0 1103.0 C866.7 1091.0 833.3 1079.2 800.0 1067.0 C766.7 1054.8 733.3 1042.7 700.0 1030.0 C666.7 1017.3 633.3 1004.7 600.0 991.0 C566.7 977.3 533.3 962.8 500.0 948.0 C466.7 933.2 433.3 917.7 400.0 902.0 C366.7 886.3 327.0 867.8 300.0 854.0 C273.0 840.2 258.2 830.7 238.0 819.0 C217.8 807.3 198.8 796.6 179.0 784.0 C159.2 771.4 132.2 752.5 119.0 743.3 C105.8 734.1 106.2 735.8 99.5 729.0 C92.8 722.2 82.4 706.8 79.0 702.4 Z" fill="url(#rg18)"/>
<path d="M79.0 672.2 C82.4 676.5 92.8 691.1 99.5 697.8 C106.2 704.4 105.8 703.1 119.0 712.1 C132.2 721.2 159.2 739.8 179.0 752.1 C198.8 764.4 217.8 774.7 238.0 786.0 C258.2 797.3 273.0 806.5 300.0 820.0 C327.0 833.6 366.7 851.8 400.0 867.1 C433.3 882.4 466.7 897.4 500.0 911.9 C533.3 926.5 566.7 940.8 600.0 954.3 C633.3 967.8 666.7 980.4 700.0 992.8 C733.3 1005.3 766.7 1017.0 800.0 1028.9 C833.3 1040.7 866.7 1052.1 900.0 1063.9 C933.3 1075.6 966.7 1088.1 1000.0 1099.5 C1033.3 1110.8 1066.7 1121.5 1100.0 1132.0 C1133.3 1142.6 1166.7 1152.6 1200.0 1162.7 C1233.3 1172.8 1266.7 1182.8 1300.0 1192.4 C1333.3 1202.0 1366.7 1211.1 1400.0 1220.4 C1433.3 1229.6 1466.7 1238.9 1500.0 1247.9 C1533.3 1257.0 1566.7 1265.8 1600.0 1274.7 C1633.3 1283.5 1666.7 1292.3 1700.0 1301.1 C1733.3 1309.9 1766.7 1319.1 1800.0 1327.6 C1833.3 1336.2 1866.7 1344.0 1900.0 1352.2 C1933.3 1360.5 1966.7 1369.1 2000.0 1377.0 C2033.3 1384.9 2066.7 1392.3 2100.0 1399.9 C2133.3 1407.4 2166.7 1415.2 2200.0 1422.3 C2233.3 1429.3 2266.7 1436.2 2300.0 1442.0 C2333.3 1447.8 2370.8 1453.3 2400.0 1457.2 C2429.2 1461.0 2450.9 1463.3 2475.0 1465.1 C2499.1 1466.9 2523.7 1468.3 2544.3 1468.0 C2564.9 1467.6 2582.1 1466.4 2598.6 1462.8 C2615.2 1459.1 2627.1 1454.5 2643.6 1446.1 C2660.2 1437.7 2683.7 1424.4 2698.0 1412.4 C2712.2 1400.3 2721.4 1384.8 2728.9 1373.7 C2736.4 1362.6 2740.5 1350.5 2742.9 1345.9 L2749.0 1376.0 C2746.8 1380.7 2743.2 1392.7 2736.0 1404.0 C2728.8 1415.3 2720.2 1431.5 2706.0 1444.0 C2691.8 1456.5 2667.7 1470.2 2651.0 1479.0 C2634.3 1487.8 2622.7 1493.0 2606.0 1497.0 C2589.3 1501.0 2572.8 1502.3 2551.0 1503.0 C2529.2 1503.7 2500.2 1502.5 2475.0 1501.0 C2449.8 1499.5 2429.2 1497.5 2400.0 1494.0 C2370.8 1490.5 2333.3 1485.5 2300.0 1480.0 C2266.7 1474.5 2233.3 1467.8 2200.0 1461.0 C2166.7 1454.2 2133.3 1446.5 2100.0 1439.0 C2066.7 1431.5 2033.3 1423.8 2000.0 1416.0 C1966.7 1408.2 1933.3 1400.0 1900.0 1392.0 C1866.7 1384.0 1833.3 1376.3 1800.0 1368.0 C1766.7 1359.7 1733.3 1350.7 1700.0 1342.0 C1666.7 1333.3 1633.3 1324.9 1600.0 1316.0 C1566.7 1307.1 1533.3 1297.9 1500.0 1288.7 C1466.7 1279.5 1433.3 1270.3 1400.0 1261.0 C1366.7 1251.7 1333.3 1242.7 1300.0 1233.0 C1266.7 1223.3 1233.3 1213.2 1200.0 1203.0 C1166.7 1192.8 1133.3 1182.7 1100.0 1172.0 C1066.7 1161.3 1033.3 1150.5 1000.0 1139.0 C966.7 1127.5 933.3 1115.0 900.0 1103.0 C866.7 1091.0 833.3 1079.2 800.0 1067.0 C766.7 1054.8 733.3 1042.7 700.0 1030.0 C666.7 1017.3 633.3 1004.7 600.0 991.0 C566.7 977.3 533.3 962.8 500.0 948.0 C466.7 933.2 433.3 917.7 400.0 902.0 C366.7 886.3 327.0 867.8 300.0 854.0 C273.0 840.2 258.2 830.7 238.0 819.0 C217.8 807.3 198.8 796.6 179.0 784.0 C159.2 771.4 132.2 752.5 119.0 743.3 C105.8 734.1 106.2 735.8 99.5 729.0 C92.8 722.2 82.4 706.8 79.0 702.4 Z" fill="url(#rg19)"/>
<path d="M79.0 672.3 C82.4 676.6 92.8 691.5 99.5 698.2 C106.2 704.9 105.8 703.4 119.0 712.5 C132.2 721.6 159.2 740.3 179.0 752.7 C198.8 765.1 217.8 775.6 238.0 787.0 C258.2 798.4 273.0 807.7 300.0 821.4 C327.0 835.0 366.7 853.3 400.0 868.7 C433.3 884.2 466.7 899.3 500.0 914.0 C533.3 928.6 566.7 943.0 600.0 956.5 C633.3 970.1 666.7 982.7 700.0 995.2 C733.3 1007.7 766.7 1019.6 800.0 1031.6 C833.3 1043.5 866.7 1055.1 900.0 1066.9 C933.3 1078.8 966.7 1091.2 1000.0 1102.6 C1033.3 1114.0 1066.7 1124.8 1100.0 1135.4 C1133.3 1145.9 1166.7 1156.0 1200.0 1166.1 C1233.3 1176.2 1266.7 1186.3 1300.0 1196.0 C1333.3 1205.6 1366.7 1214.6 1400.0 1223.9 C1433.3 1233.2 1466.7 1242.4 1500.0 1251.5 C1533.3 1260.6 1566.7 1269.6 1600.0 1278.5 C1633.3 1287.3 1666.7 1296.0 1700.0 1304.7 C1733.3 1313.5 1766.7 1322.6 1800.0 1331.1 C1833.3 1339.6 1866.7 1347.3 1900.0 1355.5 C1933.3 1363.7 1966.7 1372.1 2000.0 1380.0 C2033.3 1387.9 2066.7 1395.4 2100.0 1402.9 C2133.3 1410.4 2166.7 1418.2 2200.0 1425.2 C2233.3 1432.1 2266.7 1439.0 2300.0 1444.7 C2333.3 1450.4 2370.8 1455.7 2400.0 1459.5 C2429.2 1463.2 2450.9 1465.4 2475.0 1467.1 C2499.1 1468.8 2523.9 1470.1 2544.5 1469.6 C2565.2 1469.2 2582.5 1467.9 2599.1 1464.2 C2615.7 1460.4 2627.5 1455.6 2644.1 1447.1 C2660.7 1438.5 2684.4 1425.1 2698.6 1412.9 C2712.8 1400.7 2721.9 1385.0 2729.3 1373.8 C2736.7 1362.7 2740.6 1350.6 2742.9 1345.9 L2749.0 1376.0 C2746.8 1380.7 2743.2 1392.7 2736.0 1404.0 C2728.8 1415.3 2720.2 1431.5 2706.0 1444.0 C2691.8 1456.5 2667.7 1470.2 2651.0 1479.0 C2634.3 1487.8 2622.7 1493.0 2606.0 1497.0 C2589.3 1501.0 2572.8 1502.3 2551.0 1503.0 C2529.2 1503.7 2500.2 1502.5 2475.0 1501.0 C2449.8 1499.5 2429.2 1497.5 2400.0 1494.0 C2370.8 1490.5 2333.3 1485.5 2300.0 1480.0 C2266.7 1474.5 2233.3 1467.8 2200.0 1461.0 C2166.7 1454.2 2133.3 1446.5 2100.0 1439.0 C2066.7 1431.5 2033.3 1423.8 2000.0 1416.0 C1966.7 1408.2 1933.3 1400.0 1900.0 1392.0 C1866.7 1384.0 1833.3 1376.3 1800.0 1368.0 C1766.7 1359.7 1733.3 1350.7 1700.0 1342.0 C1666.7 1333.3 1633.3 1324.9 1600.0 1316.0 C1566.7 1307.1 1533.3 1297.9 1500.0 1288.7 C1466.7 1279.5 1433.3 1270.3 1400.0 1261.0 C1366.7 1251.7 1333.3 1242.7 1300.0 1233.0 C1266.7 1223.3 1233.3 1213.2 1200.0 1203.0 C1166.7 1192.8 1133.3 1182.7 1100.0 1172.0 C1066.7 1161.3 1033.3 1150.5 1000.0 1139.0 C966.7 1127.5 933.3 1115.0 900.0 1103.0 C866.7 1091.0 833.3 1079.2 800.0 1067.0 C766.7 1054.8 733.3 1042.7 700.0 1030.0 C666.7 1017.3 633.3 1004.7 600.0 991.0 C566.7 977.3 533.3 962.8 500.0 948.0 C466.7 933.2 433.3 917.7 400.0 902.0 C366.7 886.3 327.0 867.8 300.0 854.0 C273.0 840.2 258.2 830.7 238.0 819.0 C217.8 807.3 198.8 796.6 179.0 784.0 C159.2 771.4 132.2 752.5 119.0 743.3 C105.8 734.1 106.2 735.8 99.5 729.0 C92.8 722.2 82.4 706.8 79.0 702.4 Z" fill="url(#rg20)"/>
<path d="M79.0 672.3 C82.4 676.7 92.8 691.8 99.5 698.6 C106.2 705.4 105.8 703.8 119.0 712.9 C132.2 722.0 159.2 740.8 179.0 753.4 C198.8 765.9 217.8 776.4 238.0 788.0 C258.2 799.6 273.0 809.0 300.0 822.7 C327.0 836.4 366.7 854.8 400.0 870.4 C433.3 885.9 466.7 901.2 500.0 916.0 C533.3 930.7 566.7 945.2 600.0 958.8 C633.3 972.4 666.7 985.0 700.0 997.6 C733.3 1010.2 766.7 1022.2 800.0 1034.3 C833.3 1046.4 866.7 1058.0 900.0 1070.0 C933.3 1081.9 966.7 1094.4 1000.0 1105.8 C1033.3 1117.3 1066.7 1128.1 1100.0 1138.7 C1133.3 1149.3 1166.7 1159.4 1200.0 1169.6 C1233.3 1179.7 1266.7 1189.8 1300.0 1199.5 C1333.3 1209.1 1366.7 1218.2 1400.0 1227.5 C1433.3 1236.7 1466.7 1246.0 1500.0 1255.1 C1533.3 1264.2 1566.7 1273.4 1600.0 1282.2 C1633.3 1291.1 1666.7 1299.6 1700.0 1308.4 C1733.3 1317.1 1766.7 1326.1 1800.0 1334.5 C1833.3 1342.9 1866.7 1350.7 1900.0 1358.8 C1933.3 1366.8 1966.7 1375.1 2000.0 1383.0 C2033.3 1390.9 2066.7 1398.4 2100.0 1406.0 C2133.3 1413.5 2166.7 1421.2 2200.0 1428.1 C2233.3 1435.0 2266.7 1441.7 2300.0 1447.3 C2333.3 1452.9 2370.8 1458.1 2400.0 1461.7 C2429.2 1465.3 2450.9 1467.4 2475.0 1469.0 C2499.1 1470.6 2524.0 1471.9 2544.8 1471.3 C2565.5 1470.7 2582.9 1469.5 2599.5 1465.6 C2616.2 1461.7 2627.9 1456.7 2644.5 1448.0 C2661.2 1439.4 2685.1 1425.8 2699.3 1413.5 C2713.5 1401.1 2722.4 1385.2 2729.6 1373.9 C2736.9 1362.7 2740.7 1350.6 2743.0 1346.0 L2749.0 1376.0 C2746.8 1380.7 2743.2 1392.7 2736.0 1404.0 C2728.8 1415.3 2720.2 1431.5 2706.0 1444.0 C2691.8 1456.5 2667.7 1470.2 2651.0 1479.0 C2634.3 1487.8 2622.7 1493.0 2606.0 1497.0 C2589.3 1501.0 2572.8 1502.3 2551.0 1503.0 C2529.2 1503.7 2500.2 1502.5 2475.0 1501.0 C2449.8 1499.5 2429.2 1497.5 2400.0 1494.0 C2370.8 1490.5 2333.3 1485.5 2300.0 1480.0 C2266.7 1474.5 2233.3 1467.8 2200.0 1461.0 C2166.7 1454.2 2133.3 1446.5 2100.0 1439.0 C2066.7 1431.5 2033.3 1423.8 2000.0 1416.0 C1966.7 1408.2 1933.3 1400.0 1900.0 1392.0 C1866.7 1384.0 1833.3 1376.3 1800.0 1368.0 C1766.7 1359.7 1733.3 1350.7 1700.0 1342.0 C1666.7 1333.3 1633.3 1324.9 1600.0 1316.0 C1566.7 1307.1 1533.3 1297.9 1500.0 1288.7 C1466.7 1279.5 1433.3 1270.3 1400.0 1261.0 C1366.7 1251.7 1333.3 1242.7 1300.0 1233.0 C1266.7 1223.3 1233.3 1213.2 1200.0 1203.0 C1166.7 1192.8 1133.3 1182.7 1100.0 1172.0 C1066.7 1161.3 1033.3 1150.5 1000.0 1139.0 C966.7 1127.5 933.3 1115.0 900.0 1103.0 C866.7 1091.0 833.3 1079.2 800.0 1067.0 C766.7 1054.8 733.3 1042.7 700.0 1030.0 C666.7 1017.3 633.3 1004.7 600.0 991.0 C566.7 977.3 533.3 962.8 500.0 948.0 C466.7 933.2 433.3 917.7 400.0 902.0 C366.7 886.3 327.0 867.8 300.0 854.0 C273.0 840.2 258.2 830.7 238.0 819.0 C217.8 807.3 198.8 796.6 179.0 784.0 C159.2 771.4 132.2 752.5 119.0 743.3 C105.8 734.1 106.2 735.8 99.5 729.0 C92.8 722.2 82.4 706.8 79.0 702.4 Z" fill="url(#rg21)"/>
</g></g>
<g clip-path="url(#cd)">
<rect x="0" y="400" width="2880" height="1200" fill="#df451f"/>
<g transform="rotate(17.0)"><path d="M535.3 348.7 C582.6 323.8 718.4 291.9 814.1 268.7 C909.9 245.5 1009.8 224.6 1109.8 209.7 C1209.8 194.8 1328.9 185.4 1414.2 179.4 C1499.5 173.3 1567.9 168.8 1621.6 173.5 C1675.3 178.1 1699.3 199.6 1736.5 207.4 C1773.7 215.1 1809.1 216.9 1845.0 220.2 C1880.9 223.5 1916.1 224.6 1951.7 227.3 C1987.4 230.0 2023.2 233.0 2059.1 236.3 C2094.9 239.6 2130.2 243.8 2167.0 247.2 C2203.7 250.6 2243.6 252.7 2279.7 256.7 C2315.7 260.7 2347.4 264.4 2383.4 271.0 C2419.4 277.6 2457.8 286.3 2495.7 296.3 C2533.6 306.3 2578.8 318.5 2610.9 331.1 C2643.0 343.8 2667.0 357.9 2688.3 372.3 C2709.6 386.7 2730.0 403.1 2738.7 417.5 C2747.5 431.9 2743.0 445.8 2740.9 458.7 C2738.7 471.6 2732.9 482.9 2725.7 494.7 C2718.5 506.5 2709.6 518.8 2697.7 529.4 C2685.7 540.0 2673.3 549.6 2654.2 558.4 C2635.1 567.2 2611.5 575.3 2583.1 582.2 C2554.7 589.2 2517.3 595.0 2484.0 600.0 C2450.6 604.9 2416.6 607.8 2383.1 612.0 C2349.5 616.2 2316.1 621.1 2282.5 625.0 C2248.8 628.8 2231.7 630.0 2181.0 635.1 C2130.2 640.1 2046.1 649.8 1978.0 655.3 C1910.0 660.8 1824.0 664.4 1772.7 667.9 C1721.5 671.3 1698.1 668.9 1670.7 676.1 C1643.2 683.3 1630.8 699.6 1608.1 710.9 C1585.4 722.2 1590.1 737.3 1534.5 743.8 C1479.0 750.4 1370.4 748.7 1275.0 750.0 C1179.5 751.3 1067.2 754.3 961.8 751.6 C856.4 749.0 732.2 741.7 642.7 734.2 C553.3 726.7 477.5 712.4 425.2 706.6 C372.8 700.8 340.7 709.7 328.9 699.4 C317.0 689.1 344.6 659.7 354.0 644.7 C363.3 629.6 371.0 626.4 384.9 609.1 C398.8 591.8 420.9 561.5 437.2 540.8 C453.6 520.1 467.4 505.4 482.9 485.0 C498.4 464.6 521.7 440.9 530.4 418.2 C539.2 395.5 488.1 373.6 535.3 348.7 Z" fill="#d93ac8" opacity="1.0" filter="url(#f34_10)"/></g>
<g transform="rotate(17.0)"><path d="M761.9 269.0 C799.7 249.9 915.8 230.7 1006.9 215.0 C1097.9 199.4 1225.5 177.8 1308.4 175.1 C1391.2 172.5 1450.7 184.8 1503.9 199.0 C1557.0 213.2 1584.4 245.8 1627.3 260.6 C1670.2 275.4 1720.1 279.3 1761.1 287.7 C1802.0 296.1 1826.5 302.2 1872.8 311.0 C1919.1 319.9 1991.0 332.8 2038.7 340.8 C2086.5 348.9 2130.4 344.2 2159.4 359.3 C2188.5 374.5 2204.4 404.0 2213.0 431.9 C2221.5 459.8 2228.0 507.8 2210.6 526.7 C2193.2 545.6 2156.3 540.5 2108.6 545.3 C2060.9 550.2 1986.7 555.4 1924.5 555.6 C1862.4 555.8 1802.3 549.1 1735.6 546.4 C1668.9 543.8 1584.9 538.1 1524.5 539.9 C1464.0 541.6 1413.3 546.7 1372.8 557.0 C1332.4 567.2 1303.8 587.7 1281.9 601.5 C1260.0 615.3 1252.3 624.5 1241.4 640.0 C1230.4 655.6 1222.6 675.4 1216.3 694.8 C1210.0 714.1 1245.6 745.0 1203.7 756.1 C1161.7 767.2 1039.8 761.8 964.7 761.2 C889.6 760.6 824.5 758.8 753.0 752.7 C681.4 746.7 574.3 738.5 535.4 725.1 C496.5 711.8 517.3 688.8 519.3 672.6 C521.3 656.3 534.3 641.8 547.3 627.4 C560.4 612.9 578.0 602.3 597.4 585.9 C616.8 569.6 645.5 549.4 663.7 529.1 C681.9 508.7 697.4 488.3 706.4 463.7 C715.5 439.2 705.7 404.2 718.0 381.8 C730.3 359.3 773.0 348.0 780.4 329.2 C787.7 310.4 724.2 288.0 761.9 269.0 Z" fill="#8d42d9" opacity="1.0" filter="url(#f80_32)"/></g>
<g transform="rotate(17.0)"><path d="M1941.8 331.8 C1948.5 298.2 1999.0 343.7 2048.9 350.3 C2098.9 356.8 2176.3 361.5 2241.4 370.9 C2306.5 380.3 2387.9 394.8 2439.5 406.5 C2491.0 418.3 2524.3 430.4 2550.6 441.6 C2576.8 452.7 2595.2 462.1 2596.9 473.4 C2598.6 484.8 2581.0 500.6 2560.9 509.5 C2540.8 518.5 2521.0 522.1 2476.3 527.0 C2431.6 532.0 2353.9 535.5 2292.8 539.2 C2231.7 542.9 2157.0 547.1 2109.7 549.2 C2062.5 551.2 2037.1 587.9 2009.1 551.7 C1981.1 515.5 1935.2 365.3 1941.8 331.8 Z" fill="#8d42d9" opacity="0.7" filter="url(#f66_26)"/></g>
<g transform="rotate(17.0)"><path d="M785.4 277.5 C834.3 254.7 996.4 220.8 1108.3 204.9 C1220.2 189.0 1394.7 175.2 1456.9 182.0 C1519.1 188.8 1487.6 231.2 1481.5 245.6 C1475.5 260.0 1450.0 262.2 1420.5 268.4 C1391.1 274.6 1341.5 277.9 1304.7 282.9 C1267.9 287.9 1233.8 293.1 1199.6 298.3 C1165.5 303.5 1133.1 308.9 1099.9 314.1 C1066.7 319.4 1033.5 325.0 1000.2 330.0 C966.8 335.0 930.7 342.0 899.9 343.9 C869.1 345.8 834.5 352.6 815.5 341.5 C796.4 330.4 736.6 300.2 785.4 277.5 Z" fill="#2874e0" opacity="0.42" filter="url(#f60_18)"/></g>
<g transform="rotate(17.0)"><path d="M852.4 257.0 C888.6 238.8 1020.9 221.2 1109.8 209.7 C1198.7 198.2 1337.5 184.9 1385.5 188.1 C1433.6 191.4 1402.3 220.1 1398.1 229.2 C1393.9 238.4 1377.6 239.0 1360.4 242.9 C1343.3 246.7 1323.7 248.2 1295.4 252.3 C1267.0 256.4 1224.4 262.5 1190.3 267.7 C1156.1 272.9 1123.7 278.1 1090.6 283.5 C1057.4 289.0 1024.2 294.4 991.1 300.3 C958.1 306.3 915.4 326.3 892.3 319.1 C869.2 311.8 816.1 275.2 852.4 257.0 Z" fill="#2874e0" opacity="1.0" filter="url(#f46_9)"/></g>
<g transform="rotate(17.0)"><path d="M567.8 694.3 C598.2 708.2 678.3 713.7 742.7 719.3 C807.2 724.8 884.1 725.7 954.5 727.7 C1024.8 729.8 1131.3 739.0 1164.7 731.4 C1198.1 723.8 1164.2 695.3 1154.9 682.1 C1145.6 668.9 1129.8 659.8 1109.2 652.2 C1088.5 644.6 1061.9 640.2 1031.1 636.3 C1000.3 632.5 959.8 631.3 924.4 629.2 C888.9 627.2 853.6 625.8 818.2 624.0 C782.8 622.3 743.8 620.1 712.0 618.9 C680.3 617.6 652.9 613.6 627.7 616.4 C602.4 619.3 570.4 623.0 560.4 635.9 C550.4 648.9 537.4 680.4 567.8 694.3 Z" fill="#2874e0" opacity="0.5" filter="url(#f56_22)"/></g>
<g transform="rotate(17.0)"><path d="M588.4 693.3 C613.8 702.4 681.7 713.5 742.7 719.3 C803.8 725.0 890.2 725.6 954.5 727.7 C1018.7 729.9 1101.3 737.7 1128.3 732.1 C1155.4 726.4 1123.6 702.2 1116.7 693.8 C1109.7 685.5 1099.2 685.2 1086.9 682.0 C1074.6 678.8 1067.7 676.2 1042.8 674.6 C1017.9 673.0 972.6 673.0 937.5 672.3 C902.4 671.5 867.5 671.2 832.2 670.0 C797.0 668.7 758.0 666.7 726.1 664.8 C694.1 662.9 663.2 658.5 640.5 658.5 C617.8 658.5 598.8 658.7 590.1 664.5 C581.4 670.3 563.0 684.1 588.4 693.3 Z" fill="#2874e0" opacity="1.0" filter="url(#f46_11)"/></g>
<linearGradient id="tailsh" gradientUnits="userSpaceOnUse" x1="75" y1="0" x2="520" y2="0"><stop offset="0" stop-color="#5a1400" stop-opacity="0.13"/><stop offset="1" stop-color="#5a1400" stop-opacity="0"/></linearGradient>
<rect x="60" y="500" width="480" height="400" fill="url(#tailsh)"/>
</g>
<linearGradient id="sg" gradientUnits="userSpaceOnUse" x1="240" y1="0" x2="2350" y2="0"><stop offset="0" stop-color="#e8483a" stop-opacity="0"/><stop offset="0.03" stop-color="#f03c98"/><stop offset="0.6" stop-color="#f03c98"/><stop offset="0.85" stop-color="#ec3fa0" stop-opacity="0.8"/><stop offset="1" stop-color="#e83fa8" stop-opacity="0.2"/></linearGradient>
<linearGradient id="sg2" gradientUnits="userSpaceOnUse" x1="240" y1="0" x2="2300" y2="0"><stop offset="0.012" stop-color="#e6582a" stop-opacity="0"/><stop offset="0.05" stop-color="#e6582a"/><stop offset="0.55" stop-color="#e6582a"/><stop offset="0.8" stop-color="#e6582a" stop-opacity="0.25"/><stop offset="1" stop-color="#e6582a" stop-opacity="0"/></linearGradient>
<path d="M268.0 625.0 C279.6 627.0 309.5 632.0 337.6 637.0 C365.7 642.0 406.4 649.9 436.8 655.0 C467.2 660.1 499.5 664.5 520.0 667.8 C540.5 671.1 536.7 670.1 560.0 675.0 C583.3 679.9 626.7 689.5 660.0 697.0 C693.3 704.5 726.7 712.0 760.0 720.0 C793.3 728.0 826.7 736.5 860.0 745.0 C893.3 753.5 920.0 761.0 960.0 771.0 C1000.0 781.0 1043.3 790.2 1100.0 805.0 C1156.7 819.8 1233.3 841.5 1300.0 860.0 C1366.7 878.5 1433.3 896.2 1500.0 916.0 C1566.7 935.8 1633.3 958.0 1700.0 979.0 C1766.7 1000.0 1850.0 1026.2 1900.0 1042.0 C1950.0 1057.8 1966.7 1063.0 2000.0 1074.0 C2033.3 1085.0 2066.7 1096.3 2100.0 1108.0 C2133.3 1119.7 2168.8 1132.3 2200.0 1144.0 C2231.2 1155.7 2262.8 1168.7 2287.0 1178.0 C2311.2 1187.3 2335.3 1196.3 2345.0 1200.0" fill="none" stroke="url(#sg)" stroke-width="11.5" filter="url(#b1)"/>
<path d="M268.0 625.0 C279.6 627.0 309.5 632.0 337.6 637.0 C365.7 642.0 406.4 649.9 436.8 655.0 C467.2 660.1 499.5 664.5 520.0 667.8 C540.5 671.1 536.7 670.1 560.0 675.0 C583.3 679.9 626.7 689.5 660.0 697.0 C693.3 704.5 726.7 712.0 760.0 720.0 C793.3 728.0 826.7 736.5 860.0 745.0 C893.3 753.5 920.0 761.0 960.0 771.0 C1000.0 781.0 1043.3 790.2 1100.0 805.0 C1156.7 819.8 1233.3 841.5 1300.0 860.0 C1366.7 878.5 1433.3 896.2 1500.0 916.0 C1566.7 935.8 1633.3 958.0 1700.0 979.0 C1766.7 1000.0 1850.0 1026.2 1900.0 1042.0 C1950.0 1057.8 1966.7 1063.0 2000.0 1074.0 C2033.3 1085.0 2066.7 1096.3 2100.0 1108.0 C2133.3 1119.7 2168.8 1132.3 2200.0 1144.0 C2231.2 1155.7 2262.8 1168.7 2287.0 1178.0 C2311.2 1187.3 2335.3 1196.3 2345.0 1200.0" fill="none" stroke="url(#sg2)" stroke-width="4.4"/>
<path d="M2345.0 1200.0 C2354.2 1203.7 2374.2 1211.0 2400.0 1222.0 C2425.8 1233.0 2466.7 1251.0 2500.0 1266.0 C2533.3 1281.0 2569.2 1297.2 2600.0 1312.0 C2630.8 1326.8 2670.8 1347.8 2685.0 1355.0" fill="none" stroke="#d8a090" stroke-width="1" stroke-dasharray="5 4" opacity="0.6"/>
<g clip-path="url(#cs)">
<linearGradient id="lg1" gradientUnits="userSpaceOnUse" x1="300" y1="0" x2="1500" y2="0"><stop offset="0" stop-color="#f03c9c" stop-opacity="0"/><stop offset="0.1" stop-color="#e83ab8"/><stop offset="0.8" stop-color="#e83aa8"/><stop offset="1" stop-color="#f03c9c" stop-opacity="0"/></linearGradient>
<path d="M300.0 795.0 C316.7 801.8 366.7 822.9 400.0 836.0 C433.3 849.1 466.7 860.8 500.0 873.5 C533.3 886.2 566.7 899.7 600.0 912.0 C633.3 924.3 666.7 936.6 700.0 947.5 C733.3 958.4 766.7 967.8 800.0 977.5 C833.3 987.2 866.7 995.8 900.0 1006.0 C933.3 1016.2 966.7 1028.5 1000.0 1039.0 C1033.3 1049.5 1066.7 1059.2 1100.0 1069.0 C1133.3 1078.8 1166.7 1088.1 1200.0 1097.5 C1233.3 1106.9 1266.7 1116.2 1300.0 1125.5 C1333.3 1134.8 1366.7 1144.0 1400.0 1153.0 C1433.3 1162.0 1483.3 1175.2 1500.0 1179.7" fill="none" stroke="url(#lg1)" stroke-width="3.4" transform="translate(0,-2)"/>
<path d="M300.0 795.0 C316.7 801.8 366.7 822.9 400.0 836.0 C433.3 849.1 466.7 860.8 500.0 873.5 C533.3 886.2 566.7 899.7 600.0 912.0 C633.3 924.3 666.7 936.6 700.0 947.5 C733.3 958.4 766.7 967.8 800.0 977.5 C833.3 987.2 866.7 995.8 900.0 1006.0 C933.3 1016.2 966.7 1028.5 1000.0 1039.0 C1033.3 1049.5 1066.7 1059.2 1100.0 1069.0 C1133.3 1078.8 1166.7 1088.1 1200.0 1097.5 C1233.3 1106.9 1266.7 1116.2 1300.0 1125.5 C1333.3 1134.8 1366.7 1144.0 1400.0 1153.0 C1433.3 1162.0 1483.3 1175.2 1500.0 1179.7" fill="none" stroke="#ee8a3c" stroke-width="1" stroke-dasharray="2 3" opacity="0.8" transform="translate(0,2)"/>
<linearGradient id="lg2" gradientUnits="userSpaceOnUse" x1="560" y1="0" x2="2000" y2="0"><stop offset="0" stop-color="#f03c9c" stop-opacity="0"/><stop offset="0.1" stop-color="#f03c9c"/><stop offset="0.7" stop-color="#f03c9c"/><stop offset="0.85" stop-color="#f03c9c" stop-opacity="0"/></linearGradient>
<path d="M560.0 540.0 C576.6 540.6 626.5 541.9 659.7 543.8 C692.9 545.6 736.1 549.3 759.4 551.2 C782.6 553.2 776.0 552.5 799.2 555.3 C822.5 558.1 865.8 563.4 899.0 567.8 C932.3 572.2 965.6 576.5 998.8 581.7 C1032.1 586.9 1065.4 593.0 1098.6 599.0 C1131.9 605.0 1165.2 611.0 1198.4 617.8 C1231.7 624.5 1265.0 632.3 1298.2 639.8 C1331.5 647.3 1364.8 655.0 1398.0 662.8 C1431.2 670.6 1464.5 678.2 1497.8 686.5 C1531.0 694.8 1564.2 703.4 1597.5 712.8 C1630.8 722.2 1664.0 732.6 1697.2 742.8 C1730.5 753.0 1763.7 763.4 1797.0 774.2 C1830.3 785.0 1863.7 796.1 1897.0 807.5 C1930.3 818.9 1980.3 836.7 1997.0 842.5" fill="none" stroke="url(#lg2)" stroke-width="4" filter="url(#b1_5)"/>
<path d="M561.0 536.0 C577.7 536.4 627.7 537.0 661.0 538.5 C694.3 540.0 737.7 543.1 761.0 544.8 C784.3 546.4 777.7 545.8 801.0 548.3 C824.3 550.8 867.7 555.9 901.0 560.0 C934.3 564.1 967.7 568.1 1001.0 573.0 C1034.3 577.9 1067.7 583.8 1101.0 589.5 C1134.3 595.2 1167.7 601.0 1201.0 607.5 C1234.3 614.0 1267.7 621.6 1301.0 628.8 C1334.3 636.0 1367.7 643.3 1401.0 650.8 C1434.3 658.2 1467.7 665.5 1501.0 673.5 C1534.3 681.5 1567.7 689.8 1601.0 698.8 C1634.3 707.8 1667.7 717.9 1701.0 727.8 C1734.3 737.7 1767.7 747.6 1801.0 758.2 C1834.3 768.8 1867.7 780.1 1901.0 791.5 C1934.3 802.9 1984.3 820.7 2001.0 826.5 L1997.0 842.5 C1980.3 836.7 1930.3 818.9 1897.0 807.5 C1863.7 796.1 1830.3 785.0 1797.0 774.2 C1763.7 763.4 1730.5 753.0 1697.2 742.8 C1664.0 732.6 1630.8 722.2 1597.5 712.8 C1564.2 703.4 1531.0 694.8 1497.8 686.5 C1464.5 678.2 1431.2 670.6 1398.0 662.8 C1364.8 655.0 1331.5 647.3 1298.2 639.8 C1265.0 632.3 1231.7 624.5 1198.4 617.8 C1165.2 611.0 1131.9 605.0 1098.6 599.0 C1065.4 593.0 1032.1 586.9 998.8 581.7 C965.6 576.5 932.3 572.2 899.0 567.8 C865.8 563.4 822.5 558.1 799.2 555.3 C776.0 552.5 782.6 553.2 759.4 551.2 C736.1 549.3 692.9 545.6 659.7 543.8 C626.5 541.9 576.6 540.6 560.0 540.0 Z" fill="#df451f"/>
</g>
</svg>
<svg width="2880" height="230" viewBox="0 0 2880 230" style="position:absolute;left:0;top:0">
<defs>
<radialGradient id="sph" cx="0.5" cy="0.24" r="0.8"><stop offset="0" stop-color="#a8f0ff"/><stop offset="0.22" stop-color="#34d2ff"/><stop offset="0.55" stop-color="#1e94ff"/><stop offset="0.85" stop-color="#1a54f4"/><stop offset="1" stop-color="#3a5cf0"/></radialGradient>
<linearGradient id="ell" x1="0" y1="0" x2="0" y2="1"><stop offset="0" stop-color="#8fd0f4"/><stop offset="0.45" stop-color="#3f98d8"/><stop offset="1" stop-color="#2f7cbc"/></linearGradient>
<linearGradient id="vell" x1="0" y1="0" x2="1" y2="0"><stop offset="0" stop-color="#bfe2f8"/><stop offset="0.35" stop-color="#58aee8"/><stop offset="1" stop-color="#2872b8"/></linearGradient>
<linearGradient id="tri" x1="0" y1="0" x2="0" y2="1"><stop offset="0" stop-color="#2a78b8"/><stop offset="1" stop-color="#0e4a86"/></linearGradient>
<linearGradient id="fire" x1="0" y1="0" x2="0" y2="1"><stop offset="0" stop-color="#e03a10"/><stop offset="0.5" stop-color="#f8a020"/><stop offset="1" stop-color="#fff6d8"/></linearGradient>
<linearGradient id="strp" x1="0" y1="0" x2="0" y2="1"><stop offset="0" stop-color="#777"/><stop offset="0.5" stop-color="#fff"/><stop offset="1" stop-color="#777"/></linearGradient>
<radialGradient id="shade" cx="0.5" cy="0.5" r="0.5"><stop offset="0.55" stop-color="#000" stop-opacity="0"/><stop offset="1" stop-color="#000" stop-opacity="0.45"/></radialGradient>
<clipPath id="c_str"><circle cx="1642.8" cy="189" r="19.6"/></clipPath>
<clipPath id="c_rb"><circle cx="1704.8" cy="188.7" r="19.6"/></clipPath>
<pattern id="dots" width="3" height="3" patternUnits="userSpaceOnUse"><rect width="3" height="3" fill="#fff"/><rect width="1.5" height="1.5" fill="#1a1a5a"/></pattern>
<filter id="ib" x="-20%" y="-20%" width="140%" height="140%"><feGaussianBlur stdDeviation="0.7"/></filter>
</defs>
<g filter="url(#ib)"><ellipse cx="32" cy="73" rx="11.5" ry="27" fill="#fbfbfd" stroke="#7a7a7a" stroke-width="1.6"/><circle cx="32" cy="63" r="8" fill="none" stroke="#f0a0a8" stroke-width="2.4" stroke-dasharray="3 2.5"/><path d="M31 66 L31 84 L28 81 L26 83 L31 93 L42 93 L43 80 L40 76 L35 75 L35 66 Z" fill="#fff" stroke="#444" stroke-width="1.6" stroke-linejoin="round"/></g>
<g filter="url(#ib)"><path d="M78 62 L92 55 L97 58 L108 60 L110 84 L106 90 L100 91 L82 82 Z" fill="#efe9a2" stroke="#8a8a82" stroke-width="1.6" stroke-linejoin="round"/><path d="M80 64 L101 72 L103 91 L83 82 Z" fill="#f6f2a6" stroke="#9a9a90" stroke-width="1.3" stroke-linejoin="round"/><path d="M101 72 L110 64" stroke="#9a9a90" stroke-width="1.3"/><rect x="108" y="83" width="4" height="5" fill="#8a8a8a"/></g>
<g filter="url(#ib)"><path d="M145 55 L150 54 L170 64 L171 92 L166 93 L146 83 Z" fill="#5c6064" stroke="#44484c" stroke-width="1.4" stroke-linejoin="round"/><path d="M149 66 L167 74 L167 90 L149 81 Z" fill="url(#fire)"/><path d="M151 57 L167 65 L167 70 L151 62 Z" fill="#b8bcc0"/><path d="M168 88 L174 89 L170 94 Z" fill="#333"/></g>
<g filter="url(#ib)"><rect x="231" y="80" width="36" height="13" fill="#a8a8b8"/><rect x="230" y="77" width="35" height="14" fill="#f2c818"/><path d="M230 77.5 H265" stroke="#222" stroke-width="2" stroke-dasharray="2 2"/><path d="M239 77 V81 M255 77 V81" stroke="#222" stroke-width="2"/><path d="M237 83 H240 V88 M253 83 H257 V87 H253 Z" stroke="#b08a50" stroke-width="1.4" fill="none"/><path d="M230 61 H266" stroke="#777" stroke-width="1.4"/><path d="M257 54 V73" stroke="#555" stroke-width="1.4"/><path d="M231 72.5 H265 M265 56 V72" stroke="#555" stroke-width="1.6" stroke-dasharray="1.6 2.4"/></g>
<path d="M346.7 56.5 L363 89" stroke="#111" stroke-width="2.2"/><circle cx="346.7" cy="56.5" r="3.8" fill="#1840e8" stroke="#102080" stroke-width="0.8"/><circle cx="355.5" cy="73" r="6.6" fill="#f81810" stroke="#701010" stroke-width="0.8"/><circle cx="363" cy="89" r="5" fill="#10e040" stroke="#106020" stroke-width="0.8"/>
<circle cx="515.8" cy="72.6" r="16.6" fill="url(#sph)"/>
<g filter="url(#ib)"><path d="M664.5 56 H689 L697.5 64 V91 H664.5 Z" fill="#fdfdfd" stroke="#555" stroke-width="1.6"/><path d="M689 56 V64 H697.5" fill="#cfe0f0" stroke="#4a78b0" stroke-width="1.4"/><path d="M667 60 H680 C688 62 692 67 693 70 C690 75 686 79 680 81 H667" fill="none" stroke="#666" stroke-width="1.2" stroke-dasharray="1.5 2"/><path d="M667 70 H690 M674 86 H680 M686 86 H692" stroke="#777" stroke-width="1.2" stroke-dasharray="1.5 2.5"/></g>
<g filter="url(#ib)"><path d="M837 53 H845 V66 H856 V82 C856 88 850 91 841 91 C832 91 826 88 826 82 V66 H837 Z" fill="url(#dots)" stroke="#1a1a5a" stroke-width="1.6" stroke-linejoin="round"/><rect x="837.8" y="53.8" width="6.4" height="12" fill="#fff"/></g>
<g filter="url(#ib)"><circle cx="40" cy="183" r="9.5" fill="#f2f4f8" stroke="#5a6a72" stroke-width="4"/><path d="M47 192 L56 205" stroke="#5a6a72" stroke-width="6.5" stroke-linecap="butt"/></g>
<g filter="url(#ib)"><rect x="81" y="168" width="25" height="17" fill="none" stroke="#6a7076" stroke-width="1.6"/><circle cx="105.5" cy="188" r="9.5" fill="#f2f4f8" fill-opacity="0.7" stroke="#5a6a72" stroke-width="4"/><path d="M112.5 197 L122 209" stroke="#5a6a72" stroke-width="6.5"/></g>
<g filter="url(#ib)" fill="none" stroke="#222" stroke-width="1.7" stroke-linecap="round" stroke-linejoin="round"><path d="M163 203 C167 197 169 190 172 182 C174 177 177 174 181 172 C187 169 195 170 201 173 C203 177 200 183 196 187 C193 190 191 192 193 194 C197 195 203 196 205 198 C203 202 197 203 192 205 C186 207 180 210 176 212"/><path d="M180 173 L177 181 M185 171.5 L182 180 M190 172 L186.5 181 M196 174 L191 183" stroke-width="2.6"/></g>
<g filter="url(#ib)"><path d="M228 172 C222 180 222 196 230 205 M262 178 C268 188 266 200 258 208" fill="none" stroke="#3a4048" stroke-width="3"/><path d="M224 186 L236 180 L236 184 L252 184 L244 196 L258 200 L250 210 L240 206 L236 212 L228 198 Z" fill="#3f8ee6"/><path d="M248 170 L260 176 L262 190 L254 186 L252 198 L244 184 Z" fill="#3f8ee6"/><path d="M224 186 C228 178 238 172 248 170 M236 212 C244 214 254 212 258 208" fill="none" stroke="#2a3440" stroke-width="2.4"/></g>
<g filter="url(#ib)"><path d="M305 170 L343 182 L342 211 L313 211 Z" fill="#fbf018"/><path d="M303 168 L308 172 L312 171 L309 178 L305 176 Z" fill="#5a5030" stroke="#333" stroke-width="1"/><circle cx="328" cy="196.5" r="13" fill="url(#sph)"/></g>
<ellipse cx="399.5" cy="189" rx="27" ry="8.2" fill="url(#ell)" filter="url(#ib)"/>
<ellipse cx="461.5" cy="189" rx="27" ry="9.4" fill="url(#ell)" filter="url(#ib)"/>
<path d="M498 185.5 C512 189 538 188.5 551.5 183.5 C546 190 536 193.5 524 193.5 C512 193.5 502 190 498 185.5 Z" fill="url(#ell)" filter="url(#ib)"/>
<path d="M587 178.5 C592 186 602 193 612.5 196 L612.5 199 L561 199 L561 196.5 C572 193 582 186 587 178.5 Z" fill="url(#tri)" filter="url(#ib)"/>
<path d="M649 176.5 C654 185 664 194 674.5 198 L674.5 199.5 L624 199.5 C634 195 644 186 649 176.5 Z" fill="#135290" filter="url(#ib)"/>
<path d="M684 180 C690 176 712 180 737 194 C734 198 712 197 694 189 C688 186 684 183 684 180 Z" fill="url(#ell)" filter="url(#ib)"/>
<path d="M746 193.5 C752 186 780 178 800 178.5 C798 184 776 196 756 197 C750 197 746 196 746 193.5 Z" fill="url(#ell)" filter="url(#ib)"/>
<path d="M808 201 L851 174.5 C858 178 863 186 861 193 C858 199 850 203 842 203 Z" fill="url(#ell)" stroke="#2f6ea8" stroke-width="0.8" filter="url(#ib)"/>
<path d="M872 180 C876 174 890 173 902 180 C914 187 922 195 923 200 C916 203 896 202 884 196 C874 191 870 185 872 180 Z" fill="#3f96dc" filter="url(#ib)"/>
<ellipse cx="958" cy="192" rx="11.4" ry="24" fill="url(#vell)" filter="url(#ib)"/>
<g filter="url(#ib)"><path d="M1019 184 A21 21 0 0 1 1059 180" fill="none" stroke="#4a90d4" stroke-width="3.2"/><path d="M1054 178 L1064 182 L1058 189 Z" fill="#3f86d0"/><path d="M1058 202 A21 21 0 0 1 1020 203" fill="none" stroke="#4a90d4" stroke-width="3.2"/><path d="M1026 201 L1016 199 L1020 208 Z" fill="#3f86d0"/><path d="M1038.5 177 C1044 186 1054 195 1062.5 198.5 L1062.5 200 L1012.5 200 C1022 196 1033 186 1038.5 177 Z" fill="#124c88"/></g>
<g filter="url(#ib)"><path d="M1071.5 186 A27 8.5 0 0 1 1118.5 184" fill="none" stroke="#f01818" stroke-width="3.6"/>
<ellipse cx="1098.5" cy="189" rx="10.4" ry="27" fill="url(#vell)"/>
<path d="M1071.5 186 A27 8.5 0 0 0 1125.5 190" fill="none" stroke="#f01818" stroke-width="3.6"/>
<path d="M1112.5 177 L1122.5 184 L1115.5 188 Z" fill="#f01818"/></g>
<g filter="url(#ib)"><path d="M1133.5 186 A27 8.5 0 0 1 1180.5 184" fill="none" stroke="#f01818" stroke-width="3.6"/>
<ellipse cx="1160.5" cy="189" rx="10.4" ry="27" fill="url(#vell)"/>
<path d="M1133.5 186 A27 8.5 0 0 0 1187.5 190" fill="none" stroke="#f01818" stroke-width="3.6"/>
<path d="M1174.5 177 L1184.5 184 L1177.5 188 Z" fill="#f01818"/></g>
<path d="M1145 190.5 L1155 203 L1150 203 L1150 216 L1140 216 L1140 203 L1135 203 Z" fill="#f8a818" stroke="#8a5a10" stroke-width="1.3" stroke-linejoin="round" filter="url(#ib)"/>
<g filter="url(#ib)" fill="none" stroke="#111" stroke-width="1.6"><circle cx="1238" cy="188.5" r="17.5" stroke-width="2"/><ellipse cx="1238" cy="178.5" rx="9.5" ry="5.5"/><path d="M1224.5 179 C1226 189 1250 189 1251.5 179"/><path d="M1221.5 192 C1225 204 1251 204 1254.5 192"/></g>
<g filter="url(#ib)" fill="none" stroke="#e81818" stroke-width="1.6"><circle cx="1300" cy="188.5" r="17.5" stroke="#111" stroke-width="2"/><ellipse cx="1300" cy="178.5" rx="9.5" ry="5.5"/><path d="M1286.5 179 C1288 189 1312 189 1313.5 179"/><path d="M1283.5 192 C1287 204 1313 204 1316.5 192"/></g>
<g filter="url(#ib)" fill="none" stroke="#111" stroke-width="1.5"><circle cx="1362" cy="188.5" r="17.5" stroke-width="2.2"/><ellipse cx="1362" cy="188.5" rx="17.5" ry="6"/><ellipse cx="1362" cy="188.5" rx="6" ry="17.5"/><path d="M1362 171 L1347 197 L1377 197 Z M1362 206 L1348 181 L1376 181 Z M1350 176 L1374 201 M1374 176 L1350 201"/></g>
<circle cx="1441.3" cy="189.7" r="19.6" fill="url(#sph)"/><circle cx="1503" cy="189.7" r="19.6" fill="url(#sph)"/>
<g filter="url(#ib)"><circle cx="1563" cy="189" r="17.5" fill="url(#sph)"/><path d="M1556 204 L1590 204 L1584 196 L1572 198 Z" fill="#18b8e0"/><path d="M1554 202 L1560 206 L1590 204" fill="none" stroke="#111" stroke-width="1.6"/><path d="M1557 196 L1579 170 L1585 175 L1563 201 Z" fill="#3a7ae8" stroke="#111" stroke-width="1.8" stroke-linejoin="round"/><path d="M1562 194 L1581 172" stroke="#dfeaff" stroke-width="2" stroke-dasharray="1.5 1.5"/><path d="M1557 196 L1563 201 L1555 203 Z" fill="#f0c8a0" stroke="#111" stroke-width="1.2"/></g>
<g clip-path="url(#c_str)" filter="url(#ib)"><rect x="1622" y="168" width="42" height="42" fill="#f4f4f4"/><rect x="1622" y="170.5" width="42" height="3.6" fill="#4a4a4a"/><rect x="1622" y="177" width="42" height="3.6" fill="#4a4a4a"/><rect x="1622" y="183.5" width="42" height="3.6" fill="#4a4a4a"/><rect x="1622" y="190" width="42" height="3.6" fill="#4a4a4a"/><rect x="1622" y="196.5" width="42" height="3.6" fill="#4a4a4a"/><rect x="1622" y="203" width="42" height="3.6" fill="#4a4a4a"/><circle cx="1642.8" cy="189" r="19.6" fill="url(#shade)"/></g>
<g clip-path="url(#c_rb)" filter="url(#ib)"><rect x="1684" y="169" width="42" height="6.6" fill="#f02878"/><rect x="1684" y="174" width="42" height="5.6" fill="#d040e0"/><rect x="1684" y="178" width="42" height="5.1" fill="#4060f0"/><rect x="1684" y="181.5" width="42" height="4.6" fill="#20c0e8"/><rect x="1684" y="184.5" width="42" height="4.6" fill="#40e060"/><rect x="1684" y="187.5" width="42" height="6.6" fill="#e8f020"/><rect x="1684" y="193" width="42" height="4.6" fill="#a0e820"/><rect x="1684" y="196" width="42" height="4.1" fill="#20d8a0"/><rect x="1684" y="199" width="42" height="4.1" fill="#3070f0"/><rect x="1684" y="202" width="42" height="4.1" fill="#c040e0"/><rect x="1684" y="205" width="42" height="5.6" fill="#f02870"/><ellipse cx="1704.8" cy="188.7" rx="8" ry="19.6" fill="none" stroke="#fff" stroke-opacity="0.25" stroke-width="2"/></g>
<g filter="url(#ib)"><path d="M1776 171 C1766 176 1766 184 1774 189 C1780 194 1776 202 1766 205" fill="none" stroke="#1a40e8" stroke-width="3.6" stroke-dasharray="4 2.4"/><path d="M1802 171 C1790 178 1790 184 1798 190 C1806 196 1800 203 1791 206" fill="none" stroke="#1a40e8" stroke-width="3.2"/><path d="M1783 166 V212" stroke="#333" stroke-width="1.5" stroke-dasharray="4 2 1 2"/></g>
<rect x="1844" y="172.6" width="13.8" height="13.6" fill="#f81c10"/><rect x="1862.4" y="172.6" width="13.8" height="13.6" fill="#f8c820"/><rect x="1844" y="190" width="13.8" height="13.6" fill="#a0cc50"/><rect x="1862.4" y="190" width="13.8" height="13.6" fill="#70ccd0"/>
<circle cx="32" cy="131" r="13.5" fill="url(#sph)"/><circle cx="32" cy="131" r="13.5" fill="none" stroke="#3050e8" stroke-width="1.4" stroke-dasharray="3 3" stroke-opacity="0.7"/>
<path d="M2770 139.5 H2782" stroke="#111" stroke-width="2.6"/>
<rect x="2802.5" y="128" width="16" height="14" fill="none" stroke="#444" stroke-width="1.6"/><path d="M2801.7 128.6 H2819.3" stroke="#111" stroke-width="3.2"/>
<path d="M2841.5 127.5 L2855.5 141.5 M2855.5 127.5 L2841.5 141.5" stroke="#111" stroke-width="2.6"/>
</svg>
<svg width="30" height="30" viewBox="0 0 30 30" style="position:absolute;left:2850px;top:1770px"><path d="M6 30 L30 6 M13 30 L30 13 M20 30 L30 20" stroke="#808080" stroke-width="2.2"/><path d="M8.5 30 L30 8.5 M15.5 30 L30 15.5 M22.5 30 L30 22.5" stroke="#fff" stroke-width="1.4"/></svg>
<svg width="12" height="12" viewBox="0 0 12 12" style="position:absolute;left:0;top:1788px"><path d="M0 0 V12 H12 C5 12 0 7 0 0 Z" fill="#000"/></svg>
</body></html>
